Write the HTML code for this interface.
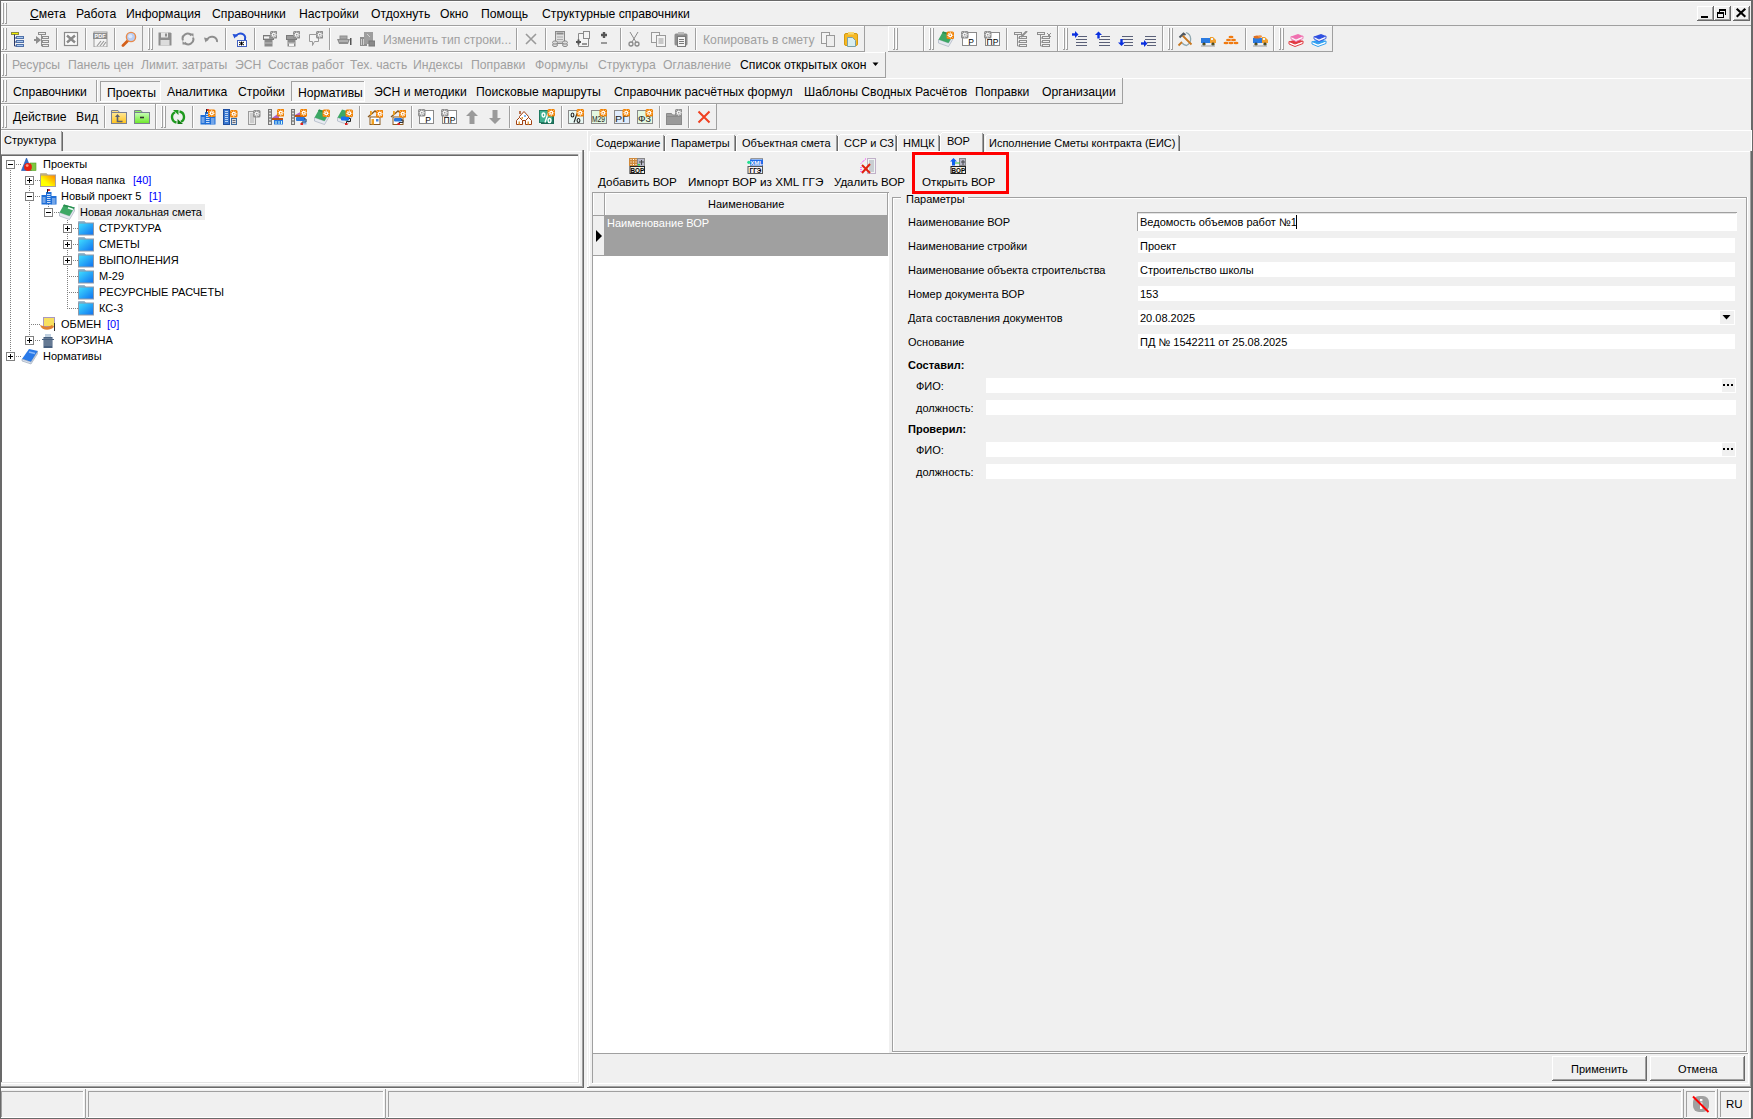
<!DOCTYPE html>
<html><head><meta charset="utf-8"><style>
html,body{margin:0;padding:0;}
body{width:1753px;height:1119px;position:relative;overflow:hidden;background:#f0f0f0;font-family:"Liberation Sans", sans-serif;}
div{position:absolute;}
.t{white-space:pre;line-height:normal;}
svg{position:absolute;}
</style></head><body>
<div style="left:0px;top:0px;width:1753px;height:1119px;background:#f0f0f0;"></div>
<div style="left:0px;top:0px;width:1753px;height:1px;background:#696969;"></div>
<div style="left:0px;top:0px;width:1px;height:1119px;background:#696969;"></div>
<div style="left:1751px;top:0px;width:2px;height:1119px;background:#696969;"></div>
<div style="left:0px;top:1118px;width:1753px;height:1px;background:#696969;"></div>
<div style="left:1px;top:1px;width:1750px;height:1px;background:#ffffff;"></div>
<div style="left:1px;top:25px;width:1750px;height:1px;background:#a0a0a0;"></div>
<div style="left:2px;top:3px;width:1px;height:20px;background:#ffffff;"></div>
<div style="left:3px;top:3px;width:1px;height:21px;background:#a0a0a0;"></div>
<div style="left:2px;top:23px;width:1px;height:1px;background:#a0a0a0;"></div>
<div style="left:5px;top:3px;width:1px;height:20px;background:#ffffff;"></div>
<div style="left:6px;top:3px;width:1px;height:21px;background:#a0a0a0;"></div>
<div style="left:5px;top:23px;width:1px;height:1px;background:#a0a0a0;"></div>
<div class="t" style="left:30px;top:7px;font-size:12.2px;color:#000;"><u>С</u>мета</div>
<div class="t" style="left:76px;top:7px;font-size:12.2px;color:#000;">Работа</div>
<div class="t" style="left:126px;top:7px;font-size:12.2px;color:#000;">Информация</div>
<div class="t" style="left:212px;top:7px;font-size:12.2px;color:#000;">Справочники</div>
<div class="t" style="left:299px;top:7px;font-size:12.2px;color:#000;">Настройки</div>
<div class="t" style="left:371px;top:7px;font-size:12.2px;color:#000;">Отдохнуть</div>
<div class="t" style="left:440px;top:7px;font-size:12.2px;color:#000;">Окно</div>
<div class="t" style="left:481px;top:7px;font-size:12.2px;color:#000;">Помощь</div>
<div class="t" style="left:542px;top:7px;font-size:12.2px;color:#000;">Структурные справочники</div>
<div style="left:1697px;top:6px;width:17px;height:15px;background:#f0f0f0;"></div>
<div style="left:1697px;top:6px;width:17px;height:1px;background:#ffffff;"></div>
<div style="left:1697px;top:6px;width:1px;height:15px;background:#ffffff;"></div>
<div style="left:1697px;top:20px;width:17px;height:1px;background:#696969;"></div>
<div style="left:1713px;top:6px;width:1px;height:15px;background:#696969;"></div>
<div style="left:1698px;top:19px;width:15px;height:1px;background:#a0a0a0;"></div>
<div style="left:1712px;top:7px;width:1px;height:13px;background:#a0a0a0;"></div>
<div style="left:1714px;top:6px;width:17px;height:15px;background:#f0f0f0;"></div>
<div style="left:1714px;top:6px;width:17px;height:1px;background:#ffffff;"></div>
<div style="left:1714px;top:6px;width:1px;height:15px;background:#ffffff;"></div>
<div style="left:1714px;top:20px;width:17px;height:1px;background:#696969;"></div>
<div style="left:1730px;top:6px;width:1px;height:15px;background:#696969;"></div>
<div style="left:1715px;top:19px;width:15px;height:1px;background:#a0a0a0;"></div>
<div style="left:1729px;top:7px;width:1px;height:13px;background:#a0a0a0;"></div>
<div style="left:1733px;top:6px;width:17px;height:15px;background:#f0f0f0;"></div>
<div style="left:1733px;top:6px;width:17px;height:1px;background:#ffffff;"></div>
<div style="left:1733px;top:6px;width:1px;height:15px;background:#ffffff;"></div>
<div style="left:1733px;top:20px;width:17px;height:1px;background:#696969;"></div>
<div style="left:1749px;top:6px;width:1px;height:15px;background:#696969;"></div>
<div style="left:1734px;top:19px;width:15px;height:1px;background:#a0a0a0;"></div>
<div style="left:1748px;top:7px;width:1px;height:13px;background:#a0a0a0;"></div>
<div style="left:1701px;top:16px;width:7px;height:2px;background:#000;"></div>
<div style="left:1719px;top:9px;width:7px;height:2px;background:#000;"></div>
<div style="left:1725px;top:9px;width:1px;height:6px;background:#000;"></div>
<div style="left:1719px;top:9px;width:1px;height:3px;background:#000;"></div>
<div style="left:1717px;top:12px;width:7px;height:2px;background:#000;"></div>
<div style="left:1717px;top:12px;width:1px;height:6px;background:#000;"></div>
<div style="left:1723px;top:12px;width:1px;height:6px;background:#000;"></div>
<div style="left:1717px;top:17px;width:7px;height:1px;background:#000;"></div>
<svg style="position:absolute;left:1733px;top:6px" width="17" height="15" viewBox="0 0 17 15"><path d="M4.5 3.5l7 6.5M11.5 3.5l-7 6.5" stroke="#000" stroke-width="2.2" stroke-linecap="square"/></svg>
<div style="left:1px;top:26px;width:864px;height:1px;background:#ffffff;"></div>
<div style="left:1px;top:26px;width:1px;height:26px;background:#ffffff;"></div>
<div style="left:1px;top:51px;width:864px;height:1px;background:#a0a0a0;"></div>
<div style="left:864px;top:26px;width:1px;height:26px;background:#a0a0a0;"></div>
<div style="left:888px;top:26px;width:36px;height:1px;background:#ffffff;"></div>
<div style="left:888px;top:26px;width:1px;height:26px;background:#ffffff;"></div>
<div style="left:888px;top:51px;width:36px;height:1px;background:#a0a0a0;"></div>
<div style="left:923px;top:26px;width:1px;height:26px;background:#a0a0a0;"></div>
<div style="left:924px;top:26px;width:134px;height:1px;background:#ffffff;"></div>
<div style="left:924px;top:26px;width:1px;height:26px;background:#ffffff;"></div>
<div style="left:924px;top:51px;width:134px;height:1px;background:#a0a0a0;"></div>
<div style="left:1057px;top:26px;width:1px;height:26px;background:#a0a0a0;"></div>
<div style="left:1058px;top:26px;width:105px;height:1px;background:#ffffff;"></div>
<div style="left:1058px;top:26px;width:1px;height:26px;background:#ffffff;"></div>
<div style="left:1058px;top:51px;width:105px;height:1px;background:#a0a0a0;"></div>
<div style="left:1162px;top:26px;width:1px;height:26px;background:#a0a0a0;"></div>
<div style="left:1163px;top:26px;width:111px;height:1px;background:#ffffff;"></div>
<div style="left:1163px;top:26px;width:1px;height:26px;background:#ffffff;"></div>
<div style="left:1163px;top:51px;width:111px;height:1px;background:#a0a0a0;"></div>
<div style="left:1273px;top:26px;width:1px;height:26px;background:#a0a0a0;"></div>
<div style="left:1274px;top:26px;width:59px;height:1px;background:#ffffff;"></div>
<div style="left:1274px;top:26px;width:1px;height:26px;background:#ffffff;"></div>
<div style="left:1274px;top:51px;width:59px;height:1px;background:#a0a0a0;"></div>
<div style="left:1332px;top:26px;width:1px;height:26px;background:#a0a0a0;"></div>
<div style="left:2px;top:28px;width:1px;height:21px;background:#ffffff;"></div>
<div style="left:3px;top:28px;width:1px;height:22px;background:#a0a0a0;"></div>
<div style="left:2px;top:49px;width:1px;height:1px;background:#a0a0a0;"></div>
<div style="left:5px;top:28px;width:1px;height:21px;background:#ffffff;"></div>
<div style="left:6px;top:28px;width:1px;height:22px;background:#a0a0a0;"></div>
<div style="left:5px;top:49px;width:1px;height:1px;background:#a0a0a0;"></div>
<div style="left:893px;top:28px;width:1px;height:21px;background:#ffffff;"></div>
<div style="left:894px;top:28px;width:1px;height:22px;background:#a0a0a0;"></div>
<div style="left:893px;top:49px;width:1px;height:1px;background:#a0a0a0;"></div>
<div style="left:896px;top:28px;width:1px;height:21px;background:#ffffff;"></div>
<div style="left:897px;top:28px;width:1px;height:22px;background:#a0a0a0;"></div>
<div style="left:896px;top:49px;width:1px;height:1px;background:#a0a0a0;"></div>
<div style="left:929px;top:28px;width:1px;height:21px;background:#ffffff;"></div>
<div style="left:930px;top:28px;width:1px;height:22px;background:#a0a0a0;"></div>
<div style="left:929px;top:49px;width:1px;height:1px;background:#a0a0a0;"></div>
<div style="left:932px;top:28px;width:1px;height:21px;background:#ffffff;"></div>
<div style="left:933px;top:28px;width:1px;height:22px;background:#a0a0a0;"></div>
<div style="left:932px;top:49px;width:1px;height:1px;background:#a0a0a0;"></div>
<div style="left:1063px;top:28px;width:1px;height:21px;background:#ffffff;"></div>
<div style="left:1064px;top:28px;width:1px;height:22px;background:#a0a0a0;"></div>
<div style="left:1063px;top:49px;width:1px;height:1px;background:#a0a0a0;"></div>
<div style="left:1066px;top:28px;width:1px;height:21px;background:#ffffff;"></div>
<div style="left:1067px;top:28px;width:1px;height:22px;background:#a0a0a0;"></div>
<div style="left:1066px;top:49px;width:1px;height:1px;background:#a0a0a0;"></div>
<div style="left:1168px;top:28px;width:1px;height:21px;background:#ffffff;"></div>
<div style="left:1169px;top:28px;width:1px;height:22px;background:#a0a0a0;"></div>
<div style="left:1168px;top:49px;width:1px;height:1px;background:#a0a0a0;"></div>
<div style="left:1171px;top:28px;width:1px;height:21px;background:#ffffff;"></div>
<div style="left:1172px;top:28px;width:1px;height:22px;background:#a0a0a0;"></div>
<div style="left:1171px;top:49px;width:1px;height:1px;background:#a0a0a0;"></div>
<div style="left:1279px;top:28px;width:1px;height:21px;background:#ffffff;"></div>
<div style="left:1280px;top:28px;width:1px;height:22px;background:#a0a0a0;"></div>
<div style="left:1279px;top:49px;width:1px;height:1px;background:#a0a0a0;"></div>
<div style="left:1282px;top:28px;width:1px;height:21px;background:#ffffff;"></div>
<div style="left:1283px;top:28px;width:1px;height:22px;background:#a0a0a0;"></div>
<div style="left:1282px;top:49px;width:1px;height:1px;background:#a0a0a0;"></div>
<div style="left:56px;top:28px;width:1px;height:22px;background:#a0a0a0;"></div>
<div style="left:57px;top:28px;width:1px;height:22px;background:#ffffff;"></div>
<div style="left:85px;top:28px;width:1px;height:22px;background:#a0a0a0;"></div>
<div style="left:86px;top:28px;width:1px;height:22px;background:#ffffff;"></div>
<div style="left:114px;top:28px;width:1px;height:22px;background:#a0a0a0;"></div>
<div style="left:115px;top:28px;width:1px;height:22px;background:#ffffff;"></div>
<div style="left:142px;top:26px;width:6px;height:1px;background:#ffffff;"></div>
<div style="left:225px;top:28px;width:1px;height:22px;background:#a0a0a0;"></div>
<div style="left:226px;top:28px;width:1px;height:22px;background:#ffffff;"></div>
<div style="left:254px;top:28px;width:1px;height:22px;background:#a0a0a0;"></div>
<div style="left:255px;top:28px;width:1px;height:22px;background:#ffffff;"></div>
<div style="left:329px;top:28px;width:1px;height:22px;background:#a0a0a0;"></div>
<div style="left:330px;top:28px;width:1px;height:22px;background:#ffffff;"></div>
<div style="left:516px;top:28px;width:1px;height:22px;background:#a0a0a0;"></div>
<div style="left:517px;top:28px;width:1px;height:22px;background:#ffffff;"></div>
<div style="left:545px;top:28px;width:1px;height:22px;background:#a0a0a0;"></div>
<div style="left:546px;top:28px;width:1px;height:22px;background:#ffffff;"></div>
<div style="left:620px;top:28px;width:1px;height:22px;background:#a0a0a0;"></div>
<div style="left:621px;top:28px;width:1px;height:22px;background:#ffffff;"></div>
<div style="left:695px;top:28px;width:1px;height:22px;background:#a0a0a0;"></div>
<div style="left:696px;top:28px;width:1px;height:22px;background:#ffffff;"></div>
<div style="left:1006px;top:28px;width:1px;height:22px;background:#a0a0a0;"></div>
<div style="left:1007px;top:28px;width:1px;height:22px;background:#ffffff;"></div>
<div style="left:1245px;top:28px;width:1px;height:22px;background:#a0a0a0;"></div>
<div style="left:1246px;top:28px;width:1px;height:22px;background:#ffffff;"></div>
<div style="left:142px;top:26px;width:1px;height:26px;background:#a0a0a0;"></div>
<div style="left:148px;top:28px;width:1px;height:21px;background:#ffffff;"></div>
<div style="left:149px;top:28px;width:1px;height:22px;background:#a0a0a0;"></div>
<div style="left:148px;top:49px;width:1px;height:1px;background:#a0a0a0;"></div>
<div style="left:151px;top:28px;width:1px;height:21px;background:#ffffff;"></div>
<div style="left:152px;top:28px;width:1px;height:22px;background:#a0a0a0;"></div>
<div style="left:151px;top:49px;width:1px;height:1px;background:#a0a0a0;"></div>
<div class="t" style="left:383px;top:33px;font-size:12.2px;color:#a0a0a0;">Изменить тип строки...</div>
<div class="t" style="left:703px;top:33px;font-size:12.2px;color:#a0a0a0;">Копировать в смету</div>
<div style="left:1px;top:52px;width:885px;height:1px;background:#ffffff;"></div>
<div style="left:1px;top:52px;width:1px;height:26px;background:#ffffff;"></div>
<div style="left:1px;top:77px;width:885px;height:1px;background:#a0a0a0;"></div>
<div style="left:885px;top:52px;width:1px;height:26px;background:#a0a0a0;"></div>
<div style="left:2px;top:54px;width:1px;height:21px;background:#ffffff;"></div>
<div style="left:3px;top:54px;width:1px;height:22px;background:#a0a0a0;"></div>
<div style="left:2px;top:75px;width:1px;height:1px;background:#a0a0a0;"></div>
<div style="left:5px;top:54px;width:1px;height:21px;background:#ffffff;"></div>
<div style="left:6px;top:54px;width:1px;height:22px;background:#a0a0a0;"></div>
<div style="left:5px;top:75px;width:1px;height:1px;background:#a0a0a0;"></div>
<div class="t" style="left:12px;top:58px;font-size:12.2px;color:#a0a0a0;">Ресурсы</div>
<div class="t" style="left:68px;top:58px;font-size:12.2px;color:#a0a0a0;">Панель цен</div>
<div class="t" style="left:141px;top:58px;font-size:12.2px;color:#a0a0a0;">Лимит. затраты</div>
<div class="t" style="left:235px;top:58px;font-size:12.2px;color:#a0a0a0;">ЭСН</div>
<div class="t" style="left:268px;top:58px;font-size:12.2px;color:#a0a0a0;">Состав работ</div>
<div class="t" style="left:350px;top:58px;font-size:12.2px;color:#a0a0a0;">Тех. часть</div>
<div class="t" style="left:413px;top:58px;font-size:12.2px;color:#a0a0a0;">Индексы</div>
<div class="t" style="left:471px;top:58px;font-size:12.2px;color:#a0a0a0;">Поправки</div>
<div class="t" style="left:535px;top:58px;font-size:12.2px;color:#a0a0a0;">Формулы</div>
<div class="t" style="left:598px;top:58px;font-size:12.2px;color:#a0a0a0;">Структура</div>
<div class="t" style="left:663px;top:58px;font-size:12.2px;color:#a0a0a0;">Оглавление</div>
<div class="t" style="left:740px;top:58px;font-size:12.2px;color:#000;">Список открытых окон</div>
<svg style="position:absolute;left:872px;top:62px" width="7" height="5" viewBox="0 0 7 5"><path d="M0.5 0.5h6l-3 3.5z" fill="#000"/></svg>
<div style="left:1px;top:78px;width:1750px;height:1px;background:#ffffff;"></div>
<div style="left:1px;top:78px;width:1122px;height:1px;background:#ffffff;"></div>
<div style="left:1px;top:78px;width:1px;height:26px;background:#ffffff;"></div>
<div style="left:1px;top:103px;width:1122px;height:1px;background:#a0a0a0;"></div>
<div style="left:1122px;top:78px;width:1px;height:26px;background:#a0a0a0;"></div>
<div style="left:2px;top:80px;width:1px;height:21px;background:#ffffff;"></div>
<div style="left:3px;top:80px;width:1px;height:22px;background:#a0a0a0;"></div>
<div style="left:2px;top:101px;width:1px;height:1px;background:#a0a0a0;"></div>
<div style="left:5px;top:80px;width:1px;height:21px;background:#ffffff;"></div>
<div style="left:6px;top:80px;width:1px;height:22px;background:#a0a0a0;"></div>
<div style="left:5px;top:101px;width:1px;height:1px;background:#a0a0a0;"></div>
<div style="left:96px;top:80px;width:1px;height:22px;background:#a0a0a0;"></div>
<div style="left:97px;top:80px;width:1px;height:22px;background:#ffffff;"></div>
<div style="left:100px;top:81px;width:60px;height:20px;background:#f4f4f4;"></div>
<div style="left:100px;top:81px;width:61px;height:1px;background:#a0a0a0;"></div>
<div style="left:100px;top:81px;width:1px;height:20px;background:#a0a0a0;"></div>
<div style="left:100px;top:101px;width:61px;height:1px;background:#ffffff;"></div>
<div style="left:160px;top:81px;width:1px;height:21px;background:#ffffff;"></div>
<div style="left:291px;top:81px;width:73px;height:20px;background:#f4f4f4;"></div>
<div style="left:291px;top:81px;width:74px;height:1px;background:#a0a0a0;"></div>
<div style="left:291px;top:81px;width:1px;height:20px;background:#a0a0a0;"></div>
<div style="left:291px;top:101px;width:74px;height:1px;background:#ffffff;"></div>
<div style="left:364px;top:81px;width:1px;height:21px;background:#ffffff;"></div>
<div class="t" style="left:13px;top:85px;font-size:12.2px;color:#000;">Справочники</div>
<div class="t" style="left:107px;top:86px;font-size:12.2px;color:#000;">Проекты</div>
<div class="t" style="left:167px;top:85px;font-size:12.2px;color:#000;">Аналитика</div>
<div class="t" style="left:238px;top:85px;font-size:12.2px;color:#000;">Стройки</div>
<div class="t" style="left:298px;top:86px;font-size:12.2px;color:#000;">Нормативы</div>
<div class="t" style="left:374px;top:85px;font-size:12.2px;color:#000;">ЭСН и методики</div>
<div class="t" style="left:476px;top:85px;font-size:12.2px;color:#000;">Поисковые маршруты</div>
<div class="t" style="left:614px;top:85px;font-size:12.2px;color:#000;">Справочник расчётных формул</div>
<div class="t" style="left:804px;top:85px;font-size:12.2px;color:#000;">Шаблоны Сводных Расчётов</div>
<div class="t" style="left:975px;top:85px;font-size:12.2px;color:#000;">Поправки</div>
<div class="t" style="left:1042px;top:85px;font-size:12.2px;color:#000;">Организации</div>
<div style="left:1px;top:104px;width:155px;height:1px;background:#ffffff;"></div>
<div style="left:1px;top:104px;width:1px;height:26px;background:#ffffff;"></div>
<div style="left:1px;top:129px;width:155px;height:1px;background:#a0a0a0;"></div>
<div style="left:155px;top:104px;width:1px;height:26px;background:#a0a0a0;"></div>
<div style="left:156px;top:104px;width:561px;height:1px;background:#ffffff;"></div>
<div style="left:156px;top:104px;width:1px;height:26px;background:#ffffff;"></div>
<div style="left:156px;top:129px;width:561px;height:1px;background:#a0a0a0;"></div>
<div style="left:716px;top:104px;width:1px;height:26px;background:#a0a0a0;"></div>
<div style="left:2px;top:106px;width:1px;height:21px;background:#ffffff;"></div>
<div style="left:3px;top:106px;width:1px;height:22px;background:#a0a0a0;"></div>
<div style="left:2px;top:127px;width:1px;height:1px;background:#a0a0a0;"></div>
<div style="left:5px;top:106px;width:1px;height:21px;background:#ffffff;"></div>
<div style="left:6px;top:106px;width:1px;height:22px;background:#a0a0a0;"></div>
<div style="left:5px;top:127px;width:1px;height:1px;background:#a0a0a0;"></div>
<div style="left:161px;top:106px;width:1px;height:21px;background:#ffffff;"></div>
<div style="left:162px;top:106px;width:1px;height:22px;background:#a0a0a0;"></div>
<div style="left:161px;top:127px;width:1px;height:1px;background:#a0a0a0;"></div>
<div style="left:164px;top:106px;width:1px;height:21px;background:#ffffff;"></div>
<div style="left:165px;top:106px;width:1px;height:22px;background:#a0a0a0;"></div>
<div style="left:164px;top:127px;width:1px;height:1px;background:#a0a0a0;"></div>
<div class="t" style="left:13px;top:110px;font-size:12.2px;color:#000;">Действие</div>
<div class="t" style="left:76px;top:110px;font-size:12.2px;color:#000;">Вид</div>
<div style="left:104px;top:106px;width:1px;height:22px;background:#a0a0a0;"></div>
<div style="left:105px;top:106px;width:1px;height:22px;background:#ffffff;"></div>
<div style="left:192px;top:106px;width:1px;height:22px;background:#a0a0a0;"></div>
<div style="left:193px;top:106px;width:1px;height:22px;background:#ffffff;"></div>
<div style="left:359px;top:106px;width:1px;height:22px;background:#a0a0a0;"></div>
<div style="left:360px;top:106px;width:1px;height:22px;background:#ffffff;"></div>
<div style="left:411px;top:106px;width:1px;height:22px;background:#a0a0a0;"></div>
<div style="left:412px;top:106px;width:1px;height:22px;background:#ffffff;"></div>
<div style="left:509px;top:106px;width:1px;height:22px;background:#a0a0a0;"></div>
<div style="left:510px;top:106px;width:1px;height:22px;background:#ffffff;"></div>
<div style="left:561px;top:106px;width:1px;height:22px;background:#a0a0a0;"></div>
<div style="left:562px;top:106px;width:1px;height:22px;background:#ffffff;"></div>
<div style="left:659px;top:106px;width:1px;height:22px;background:#a0a0a0;"></div>
<div style="left:660px;top:106px;width:1px;height:22px;background:#ffffff;"></div>
<div style="left:688px;top:106px;width:1px;height:22px;background:#a0a0a0;"></div>
<div style="left:689px;top:106px;width:1px;height:22px;background:#ffffff;"></div>
<div style="left:1px;top:130px;width:1750px;height:1px;background:#ffffff;"></div>
<div class="t" style="left:4px;top:134px;font-size:11px;color:#000;">Структура</div>
<div style="left:61px;top:131px;width:1px;height:20px;background:#a0a0a0;"></div>
<div style="left:62px;top:132px;width:1px;height:19px;background:#696969;"></div>
<div style="left:63px;top:151px;width:522px;height:1px;background:#ffffff;"></div>
<div style="left:1px;top:131px;width:1px;height:23px;background:#ffffff;"></div>
<div style="left:582px;top:150px;width:1px;height:937px;background:#a0a0a0;"></div>
<div style="left:583px;top:150px;width:1px;height:938px;background:#696969;"></div>
<div style="left:1px;top:1086px;width:582px;height:1px;background:#a0a0a0;"></div>
<div style="left:0px;top:1087px;width:584px;height:1px;background:#696969;"></div>
<div style="left:1px;top:154px;width:578px;height:1px;background:#a0a0a0;"></div>
<div style="left:1px;top:155px;width:577px;height:1px;background:#696969;"></div>
<div style="left:1px;top:155px;width:1px;height:927px;background:#696969;"></div>
<div style="left:2px;top:156px;width:576px;height:926px;background:#ffffff;"></div>
<div style="left:1px;top:1082px;width:578px;height:1px;background:#e3e3e3;"></div>
<div style="left:578px;top:154px;width:1px;height:929px;background:#e3e3e3;"></div>
<div style="left:1px;top:1083px;width:579px;height:1px;background:#ffffff;"></div>
<div style="left:579px;top:154px;width:1px;height:930px;background:#ffffff;"></div>
<div style="left:587px;top:131px;width:1px;height:957px;background:#ffffff;"></div>
<div style="left:588px;top:131px;width:2px;height:20px;background:#ececec;"></div>
<div style="left:592px;top:134px;width:71px;height:1px;background:#ffffff;"></div>
<div style="left:590px;top:136px;width:1px;height:15px;background:#ffffff;"></div>
<div style="left:591px;top:135px;width:1px;height:1px;background:#ffffff;"></div>
<div style="left:663px;top:135px;width:1px;height:16px;background:#a0a0a0;"></div>
<div style="left:664px;top:136px;width:1px;height:15px;background:#696969;"></div>
<div class="t" style="left:596px;top:137px;font-size:11px;color:#000;">Содержание</div>
<div style="left:667px;top:134px;width:67px;height:1px;background:#ffffff;"></div>
<div style="left:665px;top:136px;width:1px;height:15px;background:#ffffff;"></div>
<div style="left:666px;top:135px;width:1px;height:1px;background:#ffffff;"></div>
<div style="left:734px;top:135px;width:1px;height:16px;background:#a0a0a0;"></div>
<div style="left:735px;top:136px;width:1px;height:15px;background:#696969;"></div>
<div class="t" style="left:671px;top:137px;font-size:11px;color:#000;">Параметры</div>
<div style="left:738px;top:134px;width:98px;height:1px;background:#ffffff;"></div>
<div style="left:736px;top:136px;width:1px;height:15px;background:#ffffff;"></div>
<div style="left:737px;top:135px;width:1px;height:1px;background:#ffffff;"></div>
<div style="left:836px;top:135px;width:1px;height:16px;background:#a0a0a0;"></div>
<div style="left:837px;top:136px;width:1px;height:15px;background:#696969;"></div>
<div class="t" style="left:742px;top:137px;font-size:11px;color:#000;">Объектная смета</div>
<div style="left:840px;top:134px;width:55px;height:1px;background:#ffffff;"></div>
<div style="left:838px;top:136px;width:1px;height:15px;background:#ffffff;"></div>
<div style="left:839px;top:135px;width:1px;height:1px;background:#ffffff;"></div>
<div style="left:895px;top:135px;width:1px;height:16px;background:#a0a0a0;"></div>
<div style="left:896px;top:136px;width:1px;height:15px;background:#696969;"></div>
<div class="t" style="left:844px;top:137px;font-size:11px;color:#000;">ССР и СЗ</div>
<div style="left:899px;top:134px;width:39px;height:1px;background:#ffffff;"></div>
<div style="left:897px;top:136px;width:1px;height:15px;background:#ffffff;"></div>
<div style="left:898px;top:135px;width:1px;height:1px;background:#ffffff;"></div>
<div style="left:938px;top:135px;width:1px;height:16px;background:#a0a0a0;"></div>
<div style="left:939px;top:136px;width:1px;height:15px;background:#696969;"></div>
<div class="t" style="left:903px;top:137px;font-size:11px;color:#000;">НМЦК</div>
<div style="left:987px;top:134px;width:191px;height:1px;background:#ffffff;"></div>
<div style="left:985px;top:136px;width:1px;height:15px;background:#ffffff;"></div>
<div style="left:986px;top:135px;width:1px;height:1px;background:#ffffff;"></div>
<div style="left:1178px;top:135px;width:1px;height:16px;background:#a0a0a0;"></div>
<div style="left:1179px;top:136px;width:1px;height:15px;background:#696969;"></div>
<div class="t" style="left:989px;top:137px;font-size:11px;color:#000;">Исполнение Сметы контракта (ЕИС)</div>
<div style="left:942px;top:132px;width:40px;height:1px;background:#ffffff;"></div>
<div style="left:941px;top:133px;width:1px;height:1px;background:#ffffff;"></div>
<div style="left:940px;top:134px;width:1px;height:18px;background:#ffffff;"></div>
<div style="left:982px;top:133px;width:1px;height:19px;background:#a0a0a0;"></div>
<div style="left:983px;top:134px;width:1px;height:18px;background:#696969;"></div>
<div class="t" style="left:947px;top:135px;font-size:11px;color:#000;">ВОР</div>
<div style="left:589px;top:151px;width:351px;height:1px;background:#ffffff;"></div>
<div style="left:984px;top:151px;width:766px;height:1px;background:#ffffff;"></div>
<div style="left:589px;top:151px;width:1px;height:935px;background:#ffffff;"></div>
<div style="left:1750px;top:151px;width:1px;height:936px;background:#a0a0a0;"></div>
<div style="left:1751px;top:130px;width:1px;height:21px;background:#ffffff;"></div>
<div style="left:1751px;top:151px;width:1px;height:937px;background:#696969;"></div>
<div style="left:589px;top:1086px;width:1162px;height:1px;background:#a0a0a0;"></div>
<div style="left:587px;top:1087px;width:1165px;height:1px;background:#696969;"></div>
<div class="t" style="left:598px;top:175px;font-size:11.65px;color:#000;">Добавить ВОР</div>
<div class="t" style="left:688px;top:175px;font-size:11.75px;color:#000;">Импорт ВОР из XML ГГЭ</div>
<div class="t" style="left:834px;top:176px;font-size:11.5px;color:#000;">Удалить ВОР</div>
<div class="t" style="left:922px;top:175px;font-size:11.65px;color:#000;">Открыть ВОР</div>
<div style="left:912px;top:152px;width:97px;height:42px;background:transparent;border:3px solid #ff0000;box-sizing:border-box;"></div>
<div style="left:592px;top:192px;width:297px;height:1px;background:#a0a0a0;"></div>
<div style="left:592px;top:192px;width:1px;height:861px;background:#a0a0a0;"></div>
<div style="left:593px;top:193px;width:296px;height:860px;background:#ffffff;"></div>
<div style="left:593px;top:193px;width:295px;height:22px;background:#f0f0f0;"></div>
<div style="left:593px;top:215px;width:295px;height:1px;background:#a0a0a0;"></div>
<div style="left:604px;top:193px;width:1px;height:63px;background:#a0a0a0;"></div>
<div style="left:887px;top:193px;width:1px;height:23px;background:#a0a0a0;"></div>
<div style="left:605px;top:193px;width:282px;height:1px;background:#ffffff;"></div>
<div style="left:605px;top:193px;width:1px;height:22px;background:#ffffff;"></div>
<div style="left:593px;top:193px;width:1px;height:62px;background:#ffffff;"></div>
<div style="left:593px;top:215px;width:295px;height:1px;background:#a0a0a0;"></div>
<div class="t" style="left:708px;top:198px;font-size:11px;color:#000;">Наименование</div>
<div style="left:605px;top:216px;width:283px;height:39px;background:#a0a0a0;"></div>
<div style="left:593px;top:216px;width:11px;height:39px;background:#f0f0f0;"></div>
<div style="left:593px;top:255px;width:295px;height:1px;background:#a0a0a0;"></div>
<div style="left:604px;top:216px;width:1px;height:40px;background:#a0a0a0;"></div>
<svg style="position:absolute;left:596px;top:230px" width="7" height="12" viewBox="0 0 7 12"><path d="M0 0L6 6L0 12z" fill="#000"/></svg>
<div class="t" style="left:607px;top:217px;font-size:11px;color:#ffffff;">Наименование ВОР</div>
<div style="left:892px;top:197px;width:9px;height:1px;background:#a0a0a0;"></div>
<div style="left:893px;top:198px;width:8px;height:1px;background:#ffffff;"></div>
<div style="left:968px;top:197px;width:779px;height:1px;background:#a0a0a0;"></div>
<div style="left:968px;top:198px;width:779px;height:1px;background:#ffffff;"></div>
<div style="left:892px;top:197px;width:1px;height:855px;background:#a0a0a0;"></div>
<div style="left:893px;top:198px;width:1px;height:853px;background:#ffffff;"></div>
<div style="left:1746px;top:197px;width:1px;height:855px;background:#a0a0a0;"></div>
<div style="left:1747px;top:197px;width:1px;height:856px;background:#ffffff;"></div>
<div style="left:892px;top:1051px;width:855px;height:1px;background:#a0a0a0;"></div>
<div style="left:892px;top:1052px;width:856px;height:1px;background:#ffffff;"></div>
<div class="t" style="left:906px;top:193px;font-size:11px;color:#000;">Параметры</div>
<div class="t" style="left:908px;top:216px;font-size:11px;color:#000;">Наименование ВОР</div>
<div class="t" style="left:908px;top:240px;font-size:11px;color:#000;">Наименование стройки</div>
<div class="t" style="left:908px;top:264px;font-size:11px;color:#000;">Наименование объекта строительства</div>
<div class="t" style="left:908px;top:288px;font-size:11px;color:#000;">Номер документа ВОР</div>
<div class="t" style="left:908px;top:312px;font-size:11px;color:#000;">Дата составления документов</div>
<div class="t" style="left:908px;top:336px;font-size:11px;color:#000;">Основание</div>
<div style="left:1137px;top:212px;width:600px;height:19px;background:#ffffff;"></div>
<div style="left:1137px;top:212px;width:600px;height:1px;background:#a0a0a0;"></div>
<div style="left:1137px;top:212px;width:1px;height:19px;background:#a0a0a0;"></div>
<div style="left:1138px;top:213px;width:598px;height:1px;background:#e3e3e3;"></div>
<div class="t" style="left:1140px;top:216px;font-size:11px;color:#000;">Ведомость объемов работ №1</div>
<div style="left:1296px;top:215px;width:1px;height:14px;background:#000;"></div>
<div style="left:1138px;top:238px;width:597px;height:15px;background:#ffffff;"></div>
<div class="t" style="left:1140px;top:240px;font-size:11px;color:#000;">Проект</div>
<div style="left:1138px;top:262px;width:597px;height:15px;background:#ffffff;"></div>
<div class="t" style="left:1140px;top:264px;font-size:11px;color:#000;">Строительство школы</div>
<div style="left:1138px;top:286px;width:597px;height:15px;background:#ffffff;"></div>
<div class="t" style="left:1140px;top:288px;font-size:11px;color:#000;">153</div>
<div style="left:1138px;top:310px;width:597px;height:15px;background:#ffffff;"></div>
<div class="t" style="left:1140px;top:312px;font-size:11px;color:#000;">20.08.2025</div>
<div style="left:1138px;top:334px;width:597px;height:15px;background:#ffffff;"></div>
<div class="t" style="left:1140px;top:336px;font-size:11px;color:#000;">ПД № 1542211 от 25.08.2025</div>
<div style="left:1720px;top:311px;width:14px;height:13px;background:#f0f0f0;"></div>
<svg style="position:absolute;left:1721px;top:314px" width="11" height="6" viewBox="0 0 11 6"><path d="M1.5 1h8l-4 4.5z" fill="#000"/></svg>
<div class="t" style="left:908px;top:359px;font-size:11px;color:#000;font-weight:bold;">Составил:</div>
<div class="t" style="left:916px;top:380px;font-size:11px;color:#000;">ФИО:</div>
<div class="t" style="left:916px;top:402px;font-size:11px;color:#000;">должность:</div>
<div class="t" style="left:908px;top:423px;font-size:11px;color:#000;font-weight:bold;">Проверил:</div>
<div class="t" style="left:916px;top:444px;font-size:11px;color:#000;">ФИО:</div>
<div class="t" style="left:916px;top:466px;font-size:11px;color:#000;">должность:</div>
<div style="left:986px;top:378px;width:750px;height:15px;background:#ffffff;"></div>
<div style="left:986px;top:400px;width:750px;height:15px;background:#ffffff;"></div>
<div style="left:986px;top:442px;width:750px;height:15px;background:#ffffff;"></div>
<div style="left:986px;top:464px;width:750px;height:15px;background:#ffffff;"></div>
<div style="left:1722px;top:379px;width:13px;height:13px;background:#f0f0f0;"></div>
<svg style="position:absolute;left:1721px;top:383px" width="13" height="4" viewBox="0 0 13 4"><rect x="2" y="1" width="2" height="2" fill="#000"/><rect x="6" y="1" width="2" height="2" fill="#000"/><rect x="10" y="1" width="2" height="2" fill="#000"/></svg>
<div style="left:1722px;top:443px;width:13px;height:13px;background:#f0f0f0;"></div>
<svg style="position:absolute;left:1721px;top:447px" width="13" height="4" viewBox="0 0 13 4"><rect x="2" y="1" width="2" height="2" fill="#000"/><rect x="6" y="1" width="2" height="2" fill="#000"/><rect x="10" y="1" width="2" height="2" fill="#000"/></svg>
<div style="left:592px;top:1053px;width:1157px;height:1px;background:#a0a0a0;"></div>
<div style="left:592px;top:1053px;width:1px;height:31px;background:#a0a0a0;"></div>
<div style="left:592px;top:1083px;width:1157px;height:1px;background:#ffffff;"></div>
<div style="left:1748px;top:1053px;width:1px;height:31px;background:#ffffff;"></div>
<div style="left:1552px;top:1056px;width:95px;height:1px;background:#ffffff;"></div>
<div style="left:1552px;top:1056px;width:1px;height:25px;background:#ffffff;"></div>
<div style="left:1552px;top:1080px;width:95px;height:1px;background:#696969;"></div>
<div style="left:1646px;top:1056px;width:1px;height:25px;background:#696969;"></div>
<div style="left:1553px;top:1079px;width:93px;height:1px;background:#a0a0a0;"></div>
<div style="left:1645px;top:1057px;width:1px;height:23px;background:#a0a0a0;"></div>
<div class="t" style="left:1571px;top:1063px;font-size:11px;color:#000;">Применить</div>
<div style="left:1650px;top:1056px;width:95px;height:1px;background:#ffffff;"></div>
<div style="left:1650px;top:1056px;width:1px;height:25px;background:#ffffff;"></div>
<div style="left:1650px;top:1080px;width:95px;height:1px;background:#696969;"></div>
<div style="left:1744px;top:1056px;width:1px;height:25px;background:#696969;"></div>
<div style="left:1651px;top:1079px;width:93px;height:1px;background:#a0a0a0;"></div>
<div style="left:1743px;top:1057px;width:1px;height:23px;background:#a0a0a0;"></div>
<div class="t" style="left:1678px;top:1063px;font-size:11px;color:#000;">Отмена</div>
<div style="left:1px;top:1088px;width:1750px;height:1px;background:#ffffff;"></div>
<div style="left:1px;top:1089px;width:1750px;height:1px;background:#f8f8f8;"></div>
<div style="left:85px;top:1089px;width:1px;height:30px;background:#a0a0a0;"></div>
<div style="left:385px;top:1089px;width:1px;height:30px;background:#a0a0a0;"></div>
<div style="left:1683px;top:1089px;width:1px;height:30px;background:#a0a0a0;"></div>
<div style="left:1717px;top:1089px;width:1px;height:30px;background:#a0a0a0;"></div>
<div style="left:1px;top:1091px;width:83px;height:1px;background:#a0a0a0;"></div>
<div style="left:1px;top:1091px;width:1px;height:26px;background:#a0a0a0;"></div>
<div style="left:1px;top:1117px;width:83px;height:1px;background:#ffffff;"></div>
<div style="left:83px;top:1091px;width:1px;height:27px;background:#ffffff;"></div>
<div style="left:88px;top:1091px;width:296px;height:1px;background:#a0a0a0;"></div>
<div style="left:88px;top:1091px;width:1px;height:26px;background:#a0a0a0;"></div>
<div style="left:88px;top:1117px;width:296px;height:1px;background:#ffffff;"></div>
<div style="left:383px;top:1091px;width:1px;height:27px;background:#ffffff;"></div>
<div style="left:388px;top:1091px;width:1294px;height:1px;background:#a0a0a0;"></div>
<div style="left:388px;top:1091px;width:1px;height:26px;background:#a0a0a0;"></div>
<div style="left:388px;top:1117px;width:1294px;height:1px;background:#ffffff;"></div>
<div style="left:1681px;top:1091px;width:1px;height:27px;background:#ffffff;"></div>
<div style="left:1686px;top:1091px;width:30px;height:1px;background:#a0a0a0;"></div>
<div style="left:1686px;top:1091px;width:1px;height:26px;background:#a0a0a0;"></div>
<div style="left:1686px;top:1117px;width:30px;height:1px;background:#ffffff;"></div>
<div style="left:1715px;top:1091px;width:1px;height:27px;background:#ffffff;"></div>
<div style="left:1720px;top:1091px;width:30px;height:1px;background:#a0a0a0;"></div>
<div style="left:1720px;top:1091px;width:1px;height:26px;background:#a0a0a0;"></div>
<div style="left:1720px;top:1117px;width:30px;height:1px;background:#ffffff;"></div>
<div style="left:1749px;top:1091px;width:1px;height:27px;background:#ffffff;"></div>
<div class="t" style="left:1726px;top:1098px;font-size:11.5px;color:#000;">RU</div>
<svg style="position:absolute;left:1692px;top:1095px" width="18" height="18" viewBox="0 0 18 18"><rect x="1" y="1" width="16" height="16" rx="6" fill="#a0a0a0"/><rect x="8" y="4" width="2.4" height="2.2" fill="#fff"/><rect x="8" y="7.5" width="2.4" height="6.5" fill="#fff"/><path d="M1 1.5L16.5 17" stroke="#ff0000" stroke-width="2"/></svg>
<svg style="position:absolute;left:10px;top:31px" width="16" height="16" viewBox="0 0 16 16"><rect x="1.5" y="1.5" width="7" height="2" fill="#f5ef00" stroke="#8c8c3c"/><path d="M4.5 3.5v11.5h2M4.5 7h2M4.5 11h2" stroke="#2a3a6a" fill="none"/><rect x="6.5" y="5.5" width="7" height="2" fill="#a9c9f0" stroke="#5070a8"/><rect x="6.5" y="9.5" width="7" height="2" fill="#a9c9f0" stroke="#5070a8"/><rect x="6.5" y="13.5" width="7" height="2" fill="#a9c9f0" stroke="#5070a8"/></svg>
<svg style="position:absolute;left:34px;top:31px" width="16" height="16" viewBox="0 0 16 16"><rect x="4.5" y="1.5" width="7" height="2" fill="#eee" stroke="#8e8e8e"/><path d="M7.5 3.5v11.5h1M7.5 7h1M7.5 11h1" stroke="#8e8e8e" fill="none"/><rect x="8.5" y="5.5" width="6" height="2" fill="#eee" stroke="#8e8e8e"/><rect x="8.5" y="9.5" width="6" height="2" fill="#eee" stroke="#8e8e8e"/><rect x="8.5" y="13.5" width="6" height="2" fill="#eee" stroke="#8e8e8e"/><path d="M0 9h4M3 7l2.5 2l-2.5 2z" stroke="#8e8e8e" stroke-width="2" fill="#8e8e8e"/></svg>
<svg style="position:absolute;left:63px;top:31px" width="16" height="16" viewBox="0 0 16 16"><rect x="1.5" y="1.5" width="13" height="13" fill="#fbfbfb" stroke="#8a8a8a" stroke-width="1.2"/><path d="M4 4.5l8 7M12 4.5l-8 7" stroke="#8a8a8a" stroke-width="2.4"/></svg>
<svg style="position:absolute;left:92px;top:31px" width="16" height="16" viewBox="0 0 16 16"><rect x="2" y="1" width="13" height="15" fill="#f4f4f4" stroke="#9a9a9a"/><rect x="1" y="2" width="14" height="6" fill="#8e8e8e"/><text x="8" y="7.3" font-size="5.5" font-family="Liberation Sans" font-weight="bold" fill="#fff" text-anchor="middle">PDF</text><path d="M5 15l4-5M8 15l4-5M11 15l3-4" stroke="#9a9a9a" stroke-width="1.2"/></svg>
<svg style="position:absolute;left:121px;top:31px" width="16" height="16" viewBox="0 0 16 16"><path d="M2 14.5l5-5" stroke="#d4601a" stroke-width="2.8" stroke-linecap="round"/><circle cx="10" cy="6" r="4.6" fill="#b8cdf2" stroke="#e88a4a" stroke-width="1.4"/><circle cx="9.3" cy="5.3" r="2" fill="#dfe8fa"/></svg>
<svg style="position:absolute;left:157px;top:31px" width="16" height="16" viewBox="0 0 16 16"><path d="M1.5 1.5h12l1 1v12h-13z" fill="#8e8e8e"/><rect x="4" y="1.5" width="7" height="5" fill="#e6e6e6"/><rect x="8" y="2.5" width="2" height="3" fill="#8e8e8e"/><rect x="3.5" y="9" width="9" height="5.5" fill="#dcdcdc"/></svg>
<svg style="position:absolute;left:180px;top:31px" width="16" height="16" viewBox="0 0 16 16"><path d="M3 9.5a5 5 0 0 1 8.5-5" fill="none" stroke="#8e8e8e" stroke-width="2"/><path d="M13 6.5a5 5 0 0 1 -8.5 5" fill="none" stroke="#8e8e8e" stroke-width="2"/><path d="M10 2.5h3.5v3.5z" fill="#8e8e8e"/><path d="M6 13.5h-3.5v-3.5z" fill="#8e8e8e"/></svg>
<svg style="position:absolute;left:203px;top:31px" width="16" height="16" viewBox="0 0 16 16"><path d="M4 9.5a5 4.5 0 0 1 10 1.5" fill="none" stroke="#8e8e8e" stroke-width="2"/><path d="M1 6.5l5 1l-3.5 4z" fill="#8e8e8e"/></svg>
<svg style="position:absolute;left:232px;top:31px" width="16" height="16" viewBox="0 0 16 16"><path d="M4 5.5a4.5 4 0 0 1 9 2.5v2" fill="none" stroke="#2450d8" stroke-width="2"/><path d="M0.5 3l5 0.5l-3 4z" fill="#2450d8"/><rect x="5.5" y="9.5" width="9" height="6" fill="#fff" stroke="#4060c0"/><path d="M7 11l5 3M12 11l-5 3M9.5 10.5v4" stroke="#000" stroke-width="1"/></svg>
<svg style="position:absolute;left:261px;top:31px" width="16" height="16" viewBox="0 0 16 16"><rect x="2.5" y="4.5" width="10" height="4" fill="#9a9a9a" stroke="#7a7a7a"/><rect x="3.5" y="9" width="8" height="6.5" fill="#8a8a8a"/><rect x="3.5" y="11.5" width="8" height="1" fill="#c0c0c0"/><rect x="3" y="5.5" width="5" height="2" fill="#f4f4f4"/><rect x="9" y="0" width="7.5" height="7.5" rx="1.5" fill="#8e8e8e"/><circle cx="12.75" cy="3.75" r="2.1" fill="#f4f4f4"/><circle cx="12.75" cy="3.75" r="0.8" fill="#8e8e8e"/><path d="M12.75 0.6v1M12.75 6.9v-1M9.6 3.75h1M15.9 3.75h-1M10.5 1.5l0.8 0.8M15 1.5l-0.8 0.8M10.5 6l0.8 -0.8M15 6l-0.8 -0.8" stroke="#f4f4f4" stroke-width="0.8"/></svg>
<svg style="position:absolute;left:284px;top:31px" width="16" height="16" viewBox="0 0 16 16"><rect x="2.5" y="4.5" width="10" height="4" fill="#9a9a9a" stroke="#7a7a7a"/><rect x="3.5" y="9" width="8" height="6.5" fill="#8a8a8a"/><rect x="3.5" y="11.5" width="8" height="1" fill="#c0c0c0"/><rect x="5" y="12.5" width="5" height="2.5" fill="#f4f4f4"/><rect x="9" y="0" width="7.5" height="7.5" rx="1.5" fill="#8e8e8e"/><circle cx="12.75" cy="3.75" r="2.1" fill="#f4f4f4"/><circle cx="12.75" cy="3.75" r="0.8" fill="#8e8e8e"/><path d="M12.75 0.6v1M12.75 6.9v-1M9.6 3.75h1M15.9 3.75h-1M10.5 1.5l0.8 0.8M15 1.5l-0.8 0.8M10.5 6l0.8 -0.8M15 6l-0.8 -0.8" stroke="#f4f4f4" stroke-width="0.8"/></svg>
<svg style="position:absolute;left:307px;top:31px" width="16" height="16" viewBox="0 0 16 16"><path d="M2.5 3.5h9v7h-4l-2 4v-4h-3z" fill="#f4f4f4" stroke="#9a9a9a"/><rect x="9" y="0" width="7.5" height="7.5" rx="1.5" fill="#8e8e8e"/><circle cx="12.75" cy="3.75" r="2.1" fill="#f4f4f4"/><circle cx="12.75" cy="3.75" r="0.8" fill="#8e8e8e"/><path d="M12.75 0.6v1M12.75 6.9v-1M9.6 3.75h1M15.9 3.75h-1M10.5 1.5l0.8 0.8M15 1.5l-0.8 0.8M10.5 6l0.8 -0.8M15 6l-0.8 -0.8" stroke="#f4f4f4" stroke-width="0.8"/></svg>
<svg style="position:absolute;left:336px;top:31px" width="16" height="16" viewBox="0 0 16 16"><path d="M1 8h13l-2 5h-9z" fill="#8e8e8e"/><rect x="4" y="5" width="7" height="3" fill="#a8a8a8" stroke="#8e8e8e"/><path d="M3 10h9" stroke="#cfcfcf"/><rect x="14" y="7" width="1.5" height="7" fill="#555"/></svg>
<svg style="position:absolute;left:359px;top:31px" width="16" height="16" viewBox="0 0 16 16"><rect x="1" y="6" width="7" height="9" fill="#8e8e8e"/><rect x="5" y="1" width="9" height="12" fill="#9e9e9e"/><rect x="10" y="10" width="6" height="5" fill="#8a8a8a" stroke="#777"/><path d="M2.5 8v6M4.5 8v6M8 3l3 3" stroke="#cfcfcf"/></svg>
<svg style="position:absolute;left:523px;top:31px" width="16" height="16" viewBox="0 0 16 16"><path d="M3 3l10 10M13 3l-10 10" stroke="#9a9a9a" stroke-width="1.6"/></svg>
<svg style="position:absolute;left:552px;top:31px" width="16" height="16" viewBox="0 0 16 16"><rect x="3.5" y="0.5" width="9" height="12" fill="#e0e0e0" stroke="#8a8a8a"/><rect x="4.5" y="1.5" width="7" height="2" fill="#8a8a8a"/><path d="M5 6h6M5 8.5h6M5 11h6" stroke="#aaa"/><ellipse cx="3" cy="14" rx="2.5" ry="1.6" fill="#ddd" stroke="#8a8a8a"/><ellipse cx="13" cy="14" rx="2.5" ry="1.6" fill="#ddd" stroke="#8a8a8a"/><ellipse cx="3" cy="11.5" rx="2.5" ry="1.6" fill="#ddd" stroke="#8a8a8a"/><ellipse cx="13" cy="11.5" rx="2.5" ry="1.6" fill="#ddd" stroke="#8a8a8a"/></svg>
<svg style="position:absolute;left:575px;top:31px" width="16" height="16" viewBox="0 0 16 16"><path d="M3.5 2.5h7l3 3v10h-10z" fill="#f4f4f4" stroke="#8a8a8a"/><rect x="8.5" y="0.5" width="6" height="7" fill="#f4f4f4" stroke="#8a8a8a"/><path d="M1 11h5M3.5 8.5v5" stroke="#555" stroke-width="2"/><path d="M7 13h5" stroke="#777" stroke-width="1.5"/></svg>
<svg style="position:absolute;left:596px;top:31px" width="16" height="16" viewBox="0 0 16 16"><path d="M5 4h6M8 1v6" stroke="#555" stroke-width="2.4"/><path d="M5 12h6" stroke="#999" stroke-width="2"/></svg>
<svg style="position:absolute;left:626px;top:31px" width="16" height="16" viewBox="0 0 16 16"><path d="M4 1l6 10M12 1l-6 10" stroke="#8a8a8a" stroke-width="1"/><circle cx="5" cy="13" r="2" fill="none" stroke="#8a8a8a" stroke-width="1.3"/><circle cx="11" cy="13" r="2" fill="none" stroke="#8a8a8a" stroke-width="1.3"/></svg>
<svg style="position:absolute;left:650px;top:31px" width="16" height="16" viewBox="0 0 16 16"><rect x="1.5" y="1.5" width="8" height="10" fill="#f4f4f4" stroke="#9a9a9a"/><rect x="6.5" y="4.5" width="9" height="11" fill="#f4f4f4" stroke="#9a9a9a"/><path d="M8.5 8h5M8.5 10h5M8.5 12h5" stroke="#9a9a9a"/></svg>
<svg style="position:absolute;left:673px;top:31px" width="16" height="16" viewBox="0 0 16 16"><rect x="1.5" y="2.5" width="13" height="12" rx="1.5" fill="#8e8e8e"/><rect x="5" y="1" width="6" height="2.5" fill="#bbb"/><rect x="4.5" y="5.5" width="8" height="10" fill="#f4f4f4" stroke="#7a7a7a"/><path d="M6 8.5h5M6 10.5h5M6 12.5h5" stroke="#7a7a7a"/></svg>
<svg style="position:absolute;left:820px;top:31px" width="16" height="16" viewBox="0 0 16 16"><rect x="1.5" y="1.5" width="8" height="11" fill="#f4f4f4" stroke="#9a9a9a"/><rect x="6.5" y="4.5" width="8" height="11" fill="#eeeeee" stroke="#9a9a9a"/></svg>
<svg style="position:absolute;left:843px;top:31px" width="16" height="16" viewBox="0 0 16 16"><rect x="1.5" y="2.5" width="13" height="12" rx="1.5" fill="#f6b824" stroke="#d39a10"/><rect x="5" y="1" width="6" height="2.5" fill="#f8d870"/><path d="M4.5 6.5h5l3 3v6h-8z" fill="#d8eef0" stroke="#7aa0a8"/></svg>
<svg style="position:absolute;left:938px;top:31px" width="16" height="16" viewBox="0 0 16 16"><path d="M0.5 8.5L10.5 12L15.5 3.5V7L10.5 15.5L0.5 12z" fill="#e6eaf0" stroke="#a8b0c0" stroke-width="0.7"/><path d="M5 0.5L15.5 3.5L10.5 12L0.5 8.5z" fill="#3da865"/><path d="M5 0.5L15.5 3.5L14.5 5L4 2z" fill="#2a8e50"/><path d="M9 3.8L14 5.6" stroke="#f0fff8" stroke-width="1.6"/><rect x="8.5" y="0.5" width="7.5" height="7.5" rx="1.5" fill="#f08000"/><circle cx="12.25" cy="4.25" r="2.1" fill="#fff"/><circle cx="12.25" cy="4.25" r="0.8" fill="#f08000"/><path d="M12.25 1.1v1M12.25 7.4v-1M9.1 4.25h1M15.4 4.25h-1M10.0 2.0l0.8 0.8M14.5 2.0l-0.8 0.8M10.0 6.5l0.8 -0.8M14.5 6.5l-0.8 -0.8" stroke="#fff" stroke-width="0.8"/></svg>
<svg style="position:absolute;left:961px;top:31px" width="16" height="16" viewBox="0 0 16 16"><rect x="1.5" y="1.5" width="14" height="13" fill="#fff" stroke="#8a8a8a"/><rect x="0" y="0" width="7.5" height="7.5" rx="1.5" fill="#8e8e8e"/><circle cx="3.75" cy="3.75" r="2.1" fill="#f4f4f4"/><circle cx="3.75" cy="3.75" r="0.8" fill="#8e8e8e"/><path d="M3.75 0.6v1M3.75 6.9v-1M0.6 3.75h1M6.9 3.75h-1M1.5 1.5l0.8 0.8M6 1.5l-0.8 0.8M1.5 6l0.8 -0.8M6 6l-0.8 -0.8" stroke="#f4f4f4" stroke-width="0.8"/><text x="10" y="14" font-size="8.5" font-family="Liberation Sans" fill="#000" text-anchor="middle">Р</text></svg>
<svg style="position:absolute;left:984px;top:31px" width="16" height="16" viewBox="0 0 16 16"><rect x="1.5" y="1.5" width="14" height="13" fill="#fff" stroke="#8a8a8a"/><rect x="0" y="0" width="7.5" height="7.5" rx="1.5" fill="#8e8e8e"/><circle cx="3.75" cy="3.75" r="2.1" fill="#f4f4f4"/><circle cx="3.75" cy="3.75" r="0.8" fill="#8e8e8e"/><path d="M3.75 0.6v1M3.75 6.9v-1M0.6 3.75h1M6.9 3.75h-1M1.5 1.5l0.8 0.8M6 1.5l-0.8 0.8M1.5 6l0.8 -0.8M6 6l-0.8 -0.8" stroke="#f4f4f4" stroke-width="0.8"/><text x="8.5" y="14" font-size="8.5" font-family="Liberation Sans" fill="#000" text-anchor="middle">ПР</text></svg>
<svg style="position:absolute;left:1013px;top:31px" width="16" height="16" viewBox="0 0 16 16"><rect x="1.5" y="1.5" width="7" height="2" fill="#eee" stroke="#8e8e8e"/><path d="M4.5 3.5v11.5h2M4.5 7h2M4.5 11h2" stroke="#8e8e8e" fill="none"/><rect x="6.5" y="5.5" width="7" height="2" fill="#eee" stroke="#8e8e8e"/><rect x="6.5" y="9.5" width="7" height="2" fill="#eee" stroke="#8e8e8e"/><rect x="6.5" y="13.5" width="7" height="2" fill="#eee" stroke="#8e8e8e"/><path d="M8 6l6-6" stroke="#8e8e8e" stroke-width="2"/></svg>
<svg style="position:absolute;left:1036px;top:31px" width="16" height="16" viewBox="0 0 16 16"><rect x="1.5" y="1.5" width="7" height="2" fill="#eee" stroke="#8e8e8e"/><path d="M4.5 3.5v11.5h2M4.5 7h2M4.5 11h2" stroke="#8e8e8e" fill="none"/><rect x="6.5" y="5.5" width="7" height="2" fill="#eee" stroke="#8e8e8e"/><rect x="6.5" y="9.5" width="7" height="2" fill="#eee" stroke="#8e8e8e"/><rect x="6.5" y="13.5" width="7" height="2" fill="#eee" stroke="#8e8e8e"/><path d="M11 2l4 4M15 2l-4 4" stroke="#8e8e8e" stroke-width="1"/></svg>
<svg style="position:absolute;left:1072px;top:31px" width="16" height="16" viewBox="0 0 16 16"><g transform="translate(0,0)"><path d="M6 5.5h9M4 8.5h11M4 11.5h11M4 14.5h11" stroke="#5a6078" stroke-width="1"/><path d="M0 3.5h4" stroke="#0a30e0" stroke-width="2.4"/><path d="M3 0l3.5 3.5l-3.5 3.5z" fill="#0a30e0"/></g></svg>
<svg style="position:absolute;left:1095px;top:31px" width="16" height="16" viewBox="0 0 16 16"><g transform="translate(0,0)"><path d="M6 5.5h9M4 8.5h11M4 11.5h11M4 14.5h11" stroke="#5a6078" stroke-width="1"/><path d="M3.5 7.5v-4" stroke="#0a30e0" stroke-width="2.4"/><path d="M0 4l3.5-3.5l3.5 3.5z" fill="#0a30e0"/></g></svg>
<svg style="position:absolute;left:1118px;top:31px" width="16" height="16" viewBox="0 0 16 16"><g transform="translate(0,0)"><path d="M4 5.5h11M4 8.5h11M6 11.5h9M6 14.5h9" stroke="#5a6078" stroke-width="1"/><path d="M3.5 8v4" stroke="#0a30e0" stroke-width="2.4"/><path d="M0 11.5l3.5 3.5l3.5-3.5z" fill="#0a30e0"/></g></svg>
<svg style="position:absolute;left:1141px;top:31px" width="16" height="16" viewBox="0 0 16 16"><g transform="translate(0,0)"><path d="M4 5.5h11M4 8.5h11M6 11.5h9M6 14.5h9" stroke="#5a6078" stroke-width="1"/><path d="M0 12.5h4" stroke="#0a30e0" stroke-width="2.4"/><path d="M3 9l3.5 3.5l-3.5 3.5z" fill="#0a30e0"/></g></svg>
<svg style="position:absolute;left:1177px;top:31px" width="16" height="16" viewBox="0 0 16 16"><path d="M9 1.5A7 7 0 0 1 9.5 14.5A7 7 0 0 1 5 12" fill="none" stroke="#90a8b0" stroke-width="1.3"/><path d="M1.5 14.5l3.5-3.5" stroke="#c87820" stroke-width="1.8"/><path d="M5.5 4.5l9 9" stroke="#c87820" stroke-width="1.8"/><path d="M2.5 6.5l4-4l2 1.5" stroke="#505860" stroke-width="2" fill="none"/></svg>
<svg style="position:absolute;left:1200px;top:31px" width="16" height="16" viewBox="0 0 16 16"><rect x="1" y="7" width="10" height="5" fill="#2a7ae0"/><path d="M10 6h3l3 3v3h-6z" fill="#f0a030"/><rect x="11" y="7" width="2" height="2" fill="#e8f4ff"/><circle cx="4" cy="13" r="1.6" fill="#222"/><circle cx="13" cy="13" r="1.6" fill="#222"/><circle cx="4" cy="13" r="0.6" fill="#ee0"/><circle cx="13" cy="13" r="0.6" fill="#ee0"/><rect x="1" y="14.5" width="14" height="1" fill="#999"/></svg>
<svg style="position:absolute;left:1223px;top:31px" width="16" height="16" viewBox="0 0 16 16"><ellipse cx="8" cy="6" rx="2.5" ry="1.3" fill="#f07a10"/><ellipse cx="5.5" cy="9" rx="2.5" ry="1.3" fill="#f07a10"/><ellipse cx="10.5" cy="9" rx="2.5" ry="1.3" fill="#f07a10"/><ellipse cx="3" cy="12" rx="2.5" ry="1.3" fill="#f07a10"/><ellipse cx="8" cy="12" rx="2.5" ry="1.3" fill="#f07a10"/><ellipse cx="13" cy="12" rx="2.5" ry="1.3" fill="#f07a10"/></svg>
<svg style="position:absolute;left:1252px;top:31px" width="16" height="16" viewBox="0 0 16 16"><rect x="1" y="7" width="10" height="5" fill="#2a7ae0"/><path d="M10 6h3l3 3v3h-6z" fill="#f0a030"/><rect x="11" y="7" width="2" height="2" fill="#e8f4ff"/><circle cx="4" cy="13" r="1.6" fill="#222"/><circle cx="13" cy="13" r="1.6" fill="#222"/><circle cx="4" cy="13" r="0.6" fill="#ee0"/><circle cx="13" cy="13" r="0.6" fill="#ee0"/><rect x="1" y="14.5" width="14" height="1" fill="#999"/><ellipse cx="5" cy="6" rx="3.5" ry="1.5" fill="#e07020"/><ellipse cx="8" cy="5.5" rx="2" ry="1.2" fill="#f09040"/></svg>
<svg style="position:absolute;left:1288px;top:31px" width="16" height="16" viewBox="0 0 16 16"><path d="M1 10.5L7 13L15 10V12.5L7 15.5L1 13z" fill="#fff" stroke="#e03a40" stroke-width="1"/><path d="M1 10.5L9 8L15 10L7 13z" fill="#e03a40"/><path d="M3 5.5L8 8L15 5V7.5L8 10.5L3 8z" fill="#f8f8f8" stroke="#f070b0" stroke-width="0.9"/><path d="M3 5.5L10 3L15 5L8 8z" fill="#f070b0"/></svg>
<svg style="position:absolute;left:1311px;top:31px" width="16" height="16" viewBox="0 0 16 16"><path d="M1 10.5L7 13L15 10V12.5L7 15.5L1 13z" fill="#fff" stroke="#30a0f0" stroke-width="1"/><path d="M1 10.5L9 8L15 10L7 13z" fill="#30a0f0"/><path d="M3 5.5L8 8L15 5V7.5L8 10.5L3 8z" fill="#f8f8f8" stroke="#3050e0" stroke-width="0.9"/><path d="M3 5.5L10 3L15 5L8 8z" fill="#3050e0"/></svg>
<svg style="position:absolute;left:111px;top:110px" width="16" height="16" viewBox="0 0 16 16"><defs><linearGradient id="fgup" x1="0" y1="0" x2="0" y2="1"><stop offset="0" stop-color="#ffe898"/><stop offset="1" stop-color="#ffc21a"/></linearGradient></defs><path d="M0.5 0.5h6.5l1.5 2h7v11h-15z" fill="#ffe080" stroke="#7a8090" stroke-width="1"/><rect x="0.5" y="2.5" width="15" height="11" fill="url(#fgup)" stroke="#7a8090" stroke-width="1"/><path d="M6.5 6v5.5h5" stroke="#5a6070" stroke-width="1.6" fill="none"/><path d="M4 7l2.5-3l2.5 3z" fill="#5a6070"/></svg>
<svg style="position:absolute;left:134px;top:110px" width="16" height="16" viewBox="0 0 16 16"><defs><linearGradient id="fgminus" x1="0" y1="0" x2="0" y2="1"><stop offset="0" stop-color="#c8ffb8"/><stop offset="1" stop-color="#6ce828"/></linearGradient></defs><path d="M0.5 0.5h6.5l1.5 2h7v11h-15z" fill="#90f060" stroke="#7a8090" stroke-width="1"/><rect x="0.5" y="2.5" width="15" height="11" fill="url(#fgminus)" stroke="#7a8090" stroke-width="1"/><path d="M6 7.5h4" stroke="#333" stroke-width="1.6"/></svg>
<svg style="position:absolute;left:170px;top:109px" width="16" height="16" viewBox="0 0 16 16"><path d="M6.5 13.5A5.5 5.5 0 0 1 5 3.2" fill="none" stroke="#1f9a1f" stroke-width="2.4"/><path d="M9.5 2.5A5.5 5.5 0 0 1 11 12.8" fill="none" stroke="#1f9a1f" stroke-width="2.4"/><path d="M3 1h5.5v5z" fill="#1f9a1f"/><path d="M13 15h-5.5v-5z" fill="#127a12"/></svg>
<svg style="position:absolute;left:200px;top:109px" width="16" height="16" viewBox="0 0 16 16"><rect x="0.5" y="6" width="5" height="9.5" fill="#1f6fd8"/><rect x="5" y="3" width="5.5" height="12.5" fill="#1f6fd8"/><rect x="10" y="7" width="5.5" height="8.5" fill="#1f6fd8"/><path d="M1.5 9h3M1.5 11h3M1.5 13h3M6 5.5h3.5M6 7.5h3.5M6 9.5h3.5M6 11.5h3.5M6 13.5h3.5M11 10h3.5M11 12h3.5M11 14h3.5" stroke="#c8dcf8" stroke-width="1"/><rect x="6" y="0" width="1" height="3.5" fill="#222"/><path d="M7 0h2.5l-1 1l1 1h-2.5z" fill="#e02020"/><rect x="8" y="0.5" width="7.5" height="7.5" rx="1.5" fill="#f08000"/><circle cx="11.75" cy="4.25" r="2.1" fill="#fff"/><circle cx="11.75" cy="4.25" r="0.8" fill="#f08000"/><path d="M11.75 1.1v1M11.75 7.4v-1M8.6 4.25h1M14.9 4.25h-1M9.5 2.0l0.8 0.8M14 2.0l-0.8 0.8M9.5 6.5l0.8 -0.8M14 6.5l-0.8 -0.8" stroke="#fff" stroke-width="0.8"/></svg>
<svg style="position:absolute;left:222px;top:109px" width="16" height="16" viewBox="0 0 16 16"><rect x="1.5" y="0.5" width="6" height="15" fill="#3a78d0" stroke="#1e4ea0"/><path d="M3 2.5h3M3 4.5h3M3 6.5h3M3 8.5h3M3 10.5h3M3 12.5h3" stroke="#bcd4f4"/><rect x="9.5" y="9.5" width="5" height="6" fill="#ddd" stroke="#3a6aa0"/><path d="M10.5 11.5h3M10.5 13.5h3" stroke="#667"/><rect x="8" y="1" width="7.5" height="7.5" rx="1.5" fill="#f08000"/><circle cx="11.75" cy="4.75" r="2.1" fill="#fff"/><circle cx="11.75" cy="4.75" r="0.8" fill="#f08000"/><path d="M11.75 1.6v1M11.75 7.9v-1M8.6 4.75h1M14.9 4.75h-1M9.5 2.5l0.8 0.8M14 2.5l-0.8 0.8M9.5 7l0.8 -0.8M14 7l-0.8 -0.8" stroke="#fff" stroke-width="0.8"/></svg>
<svg style="position:absolute;left:245px;top:109px" width="16" height="16" viewBox="0 0 16 16"><rect x="3.5" y="2.5" width="7" height="13" fill="#e8e8e8" stroke="#9a9a9a"/><path d="M5 5h4M5 7h4M5 9h4M5 11h4M5 13h4" stroke="#b0b0b0"/><rect x="8" y="1" width="7.5" height="7.5" rx="1.5" fill="#8e8e8e"/><circle cx="11.75" cy="4.75" r="2.1" fill="#f4f4f4"/><circle cx="11.75" cy="4.75" r="0.8" fill="#8e8e8e"/><path d="M11.75 1.6v1M11.75 7.9v-1M8.6 4.75h1M14.9 4.75h-1M9.5 2.5l0.8 0.8M14 2.5l-0.8 0.8M9.5 7l0.8 -0.8M14 7l-0.8 -0.8" stroke="#f4f4f4" stroke-width="0.8"/></svg>
<svg style="position:absolute;left:268px;top:109px" width="16" height="16" viewBox="0 0 16 16"><rect x="0.5" y="0.5" width="3" height="15" fill="#ddd" stroke="#777"/><path d="M1 3h2M1 6h2M1 9h2M1 12h2" stroke="#555"/><path d="M4 9l7-5v5z" fill="#b060c0"/><rect x="4" y="9" width="11" height="2" fill="#c05010"/><rect x="6" y="11" width="9" height="4.5" fill="#2a78e0"/><path d="M8 12v3M11 12v3M13.5 12v3" stroke="#cfe"/><rect x="9" y="0" width="7.5" height="7.5" rx="1.5" fill="#f08000"/><circle cx="12.75" cy="3.75" r="2.1" fill="#fff"/><circle cx="12.75" cy="3.75" r="0.8" fill="#f08000"/><path d="M12.75 0.6v1M12.75 6.9v-1M9.6 3.75h1M15.9 3.75h-1M10.5 1.5l0.8 0.8M15 1.5l-0.8 0.8M10.5 6l0.8 -0.8M15 6l-0.8 -0.8" stroke="#fff" stroke-width="0.8"/></svg>
<svg style="position:absolute;left:291px;top:109px" width="16" height="16" viewBox="0 0 16 16"><rect x="0.5" y="0.5" width="3" height="15" fill="#ddd" stroke="#777"/><path d="M1 3h2M1 6h2M1 9h2M1 12h2" stroke="#555"/><path d="M4 6l7-4v4z" fill="#b060c0"/><rect x="4" y="6" width="11" height="2" fill="#c05010"/><rect x="5" y="8" width="9" height="4" rx="1" fill="#2a78e0"/><path d="M13 10h2v3h-4v2" stroke="#333" fill="none"/><rect x="9.5" y="14" width="2.5" height="2" fill="#e02020"/><rect x="12" y="10" width="3.5" height="5.5" fill="#2a78e0" opacity="0.5"/><rect x="9" y="0" width="7.5" height="7.5" rx="1.5" fill="#f08000"/><circle cx="12.75" cy="3.75" r="2.1" fill="#fff"/><circle cx="12.75" cy="3.75" r="0.8" fill="#f08000"/><path d="M12.75 0.6v1M12.75 6.9v-1M9.6 3.75h1M15.9 3.75h-1M10.5 1.5l0.8 0.8M15 1.5l-0.8 0.8M10.5 6l0.8 -0.8M15 6l-0.8 -0.8" stroke="#fff" stroke-width="0.8"/></svg>
<svg style="position:absolute;left:314px;top:109px" width="16" height="16" viewBox="0 0 16 16"><path d="M0.5 8.5L10.5 12L15.5 3.5V7L10.5 15.5L0.5 12z" fill="#e6eaf0" stroke="#a8b0c0" stroke-width="0.7"/><path d="M5 0.5L15.5 3.5L10.5 12L0.5 8.5z" fill="#3da865"/><path d="M5 0.5L15.5 3.5L14.5 5L4 2z" fill="#2a8e50"/><path d="M9 3.8L14 5.6" stroke="#f0fff8" stroke-width="1.6"/><rect x="8.5" y="0.5" width="7.5" height="7.5" rx="1.5" fill="#f08000"/><circle cx="12.25" cy="4.25" r="2.1" fill="#fff"/><circle cx="12.25" cy="4.25" r="0.8" fill="#f08000"/><path d="M12.25 1.1v1M12.25 7.4v-1M9.1 4.25h1M15.4 4.25h-1M10.0 2.0l0.8 0.8M14.5 2.0l-0.8 0.8M10.0 6.5l0.8 -0.8M14.5 6.5l-0.8 -0.8" stroke="#fff" stroke-width="0.8"/></svg>
<svg style="position:absolute;left:337px;top:109px" width="16" height="16" viewBox="0 0 16 16"><path d="M0.5 8.5L10.5 12L15.5 3.5V7L10.5 15.5L0.5 12z" fill="#e6eaf0" stroke="#a8b0c0" stroke-width="0.7"/><path d="M5 0.5L15.5 3.5L10.5 12L0.5 8.5z" fill="#3da865"/><rect x="4" y="7.5" width="8" height="4" rx="1" fill="#1a70f0"/><path d="M12 9.5h1.5v3h-4v2" stroke="#222" fill="none"/><rect x="8" y="14" width="2.5" height="2" fill="#e02020"/><rect x="8.5" y="0.5" width="7.5" height="7.5" rx="1.5" fill="#f08000"/><circle cx="12.25" cy="4.25" r="2.1" fill="#fff"/><circle cx="12.25" cy="4.25" r="0.8" fill="#f08000"/><path d="M12.25 1.1v1M12.25 7.4v-1M9.1 4.25h1M15.4 4.25h-1M10.0 2.0l0.8 0.8M14.5 2.0l-0.8 0.8M10.0 6.5l0.8 -0.8M14.5 6.5l-0.8 -0.8" stroke="#fff" stroke-width="0.8"/></svg>
<svg style="position:absolute;left:367px;top:109px" width="16" height="16" viewBox="0 0 16 16"><path d="M1 8l7-6l7 6" fill="none" stroke="#8a5a20" stroke-width="1.4"/><rect x="3" y="8" width="10" height="7.5" fill="#fff" stroke="#8a5a20"/><rect x="4.5" y="10" width="2.5" height="5.5" fill="#f0a020"/><rect x="9" y="10" width="2.5" height="2.5" fill="#4a8ae0"/><rect x="3" y="2" width="1.8" height="4" fill="#f0a020"/><rect x="9" y="1" width="7.5" height="7.5" rx="1.5" fill="#f08000"/><circle cx="12.75" cy="4.75" r="2.1" fill="#fff"/><circle cx="12.75" cy="4.75" r="0.8" fill="#f08000"/><path d="M12.75 1.6v1M12.75 7.9v-1M9.6 4.75h1M15.9 4.75h-1M10.5 2.5l0.8 0.8M15 2.5l-0.8 0.8M10.5 7l0.8 -0.8M15 7l-0.8 -0.8" stroke="#fff" stroke-width="0.8"/></svg>
<svg style="position:absolute;left:390px;top:109px" width="16" height="16" viewBox="0 0 16 16"><path d="M1 8l7-6l7 6" fill="none" stroke="#8a5a20" stroke-width="1.4"/><rect x="3" y="8" width="10" height="7.5" fill="#fff" stroke="#8a5a20"/><rect x="4" y="9" width="8" height="3.5" rx="1" fill="#2a78e0"/><path d="M11 11h2v2.5h-4v1.5" stroke="#333" fill="none"/><rect x="7.5" y="14" width="2.5" height="2" fill="#e02020"/><rect x="3" y="2" width="1.8" height="4" fill="#f0a020"/><rect x="9" y="1" width="7.5" height="7.5" rx="1.5" fill="#f08000"/><circle cx="12.75" cy="4.75" r="2.1" fill="#fff"/><circle cx="12.75" cy="4.75" r="0.8" fill="#f08000"/><path d="M12.75 1.6v1M12.75 7.9v-1M9.6 4.75h1M15.9 4.75h-1M10.5 2.5l0.8 0.8M15 2.5l-0.8 0.8M10.5 7l0.8 -0.8M15 7l-0.8 -0.8" stroke="#fff" stroke-width="0.8"/></svg>
<svg style="position:absolute;left:418px;top:109px" width="16" height="16" viewBox="0 0 16 16"><rect x="1.5" y="1.5" width="14" height="13" fill="#fff" stroke="#8a8a8a"/><rect x="0" y="0" width="7.5" height="7.5" rx="1.5" fill="#8e8e8e"/><circle cx="3.75" cy="3.75" r="2.1" fill="#f4f4f4"/><circle cx="3.75" cy="3.75" r="0.8" fill="#8e8e8e"/><path d="M3.75 0.6v1M3.75 6.9v-1M0.6 3.75h1M6.9 3.75h-1M1.5 1.5l0.8 0.8M6 1.5l-0.8 0.8M1.5 6l0.8 -0.8M6 6l-0.8 -0.8" stroke="#f4f4f4" stroke-width="0.8"/><text x="10" y="14" font-size="8.5" font-family="Liberation Sans" fill="#000" text-anchor="middle">Р</text></svg>
<svg style="position:absolute;left:441px;top:109px" width="16" height="16" viewBox="0 0 16 16"><rect x="1.5" y="1.5" width="14" height="13" fill="#fff" stroke="#8a8a8a"/><rect x="0" y="0" width="7.5" height="7.5" rx="1.5" fill="#8e8e8e"/><circle cx="3.75" cy="3.75" r="2.1" fill="#f4f4f4"/><circle cx="3.75" cy="3.75" r="0.8" fill="#8e8e8e"/><path d="M3.75 0.6v1M3.75 6.9v-1M0.6 3.75h1M6.9 3.75h-1M1.5 1.5l0.8 0.8M6 1.5l-0.8 0.8M1.5 6l0.8 -0.8M6 6l-0.8 -0.8" stroke="#f4f4f4" stroke-width="0.8"/><text x="8.5" y="14" font-size="8.5" font-family="Liberation Sans" fill="#000" text-anchor="middle">ПР</text></svg>
<svg style="position:absolute;left:464px;top:109px" width="16" height="16" viewBox="0 0 16 16"><path d="M8 1l6 6h-3.5v8h-5v-8h-3.5z" fill="#9a9a9a"/></svg>
<svg style="position:absolute;left:487px;top:109px" width="16" height="16" viewBox="0 0 16 16"><path d="M8 15l6-6h-3.5v-8h-5v8h-3.5z" fill="#9a9a9a"/></svg>
<svg style="position:absolute;left:516px;top:109px" width="16" height="16" viewBox="0 0 16 16"><path d="M3.5 7.5l4.5-5l4.5 5v4h-9z" fill="#fff" stroke="#a04010" stroke-width="1"/><path d="M4 2v3" stroke="#a04010" stroke-width="1.4"/><rect x="8" y="6" width="2" height="2" fill="#80b8f0"/><rect x="5.5" y="8" width="1.5" height="2" fill="#e0a040"/><path d="M0.5 11.5l3-3l3 3v4h-6z" fill="#fff" stroke="#a04010" stroke-width="1"/><path d="M9.5 11.5l3-3l3 3v4h-6z" fill="#fff" stroke="#a04010" stroke-width="1"/><rect x="2.5" y="12.5" width="1.5" height="3" fill="#e0a040"/><rect x="11.5" y="12.5" width="1.5" height="3" fill="#e0a040"/></svg>
<svg style="position:absolute;left:539px;top:109px" width="16" height="16" viewBox="0 0 16 16"><rect x="2.5" y="3.5" width="12" height="11" fill="#2a8a70" stroke="#1a6a55"/><rect x="0.5" y="1.5" width="13" height="12" fill="#40b090" stroke="#1f7a60"/><ellipse cx="4.5" cy="6" rx="1.4" ry="2" fill="none" stroke="#fff" stroke-width="1.4"/><path d="M9 4.5L6 13.5" stroke="#fff" stroke-width="1.4"/><ellipse cx="10.5" cy="11.5" rx="1.4" ry="2" fill="none" stroke="#fff" stroke-width="1.4"/><rect x="8.5" y="0" width="7.5" height="7.5" rx="1.5" fill="#f08000"/><circle cx="12.25" cy="3.75" r="2.1" fill="#fff"/><circle cx="12.25" cy="3.75" r="0.8" fill="#f08000"/><path d="M12.25 0.6v1M12.25 6.9v-1M9.1 3.75h1M15.4 3.75h-1M10.0 1.5l0.8 0.8M14.5 1.5l-0.8 0.8M10.0 6l0.8 -0.8M14.5 6l-0.8 -0.8" stroke="#fff" stroke-width="0.8"/></svg>
<svg style="position:absolute;left:568px;top:109px" width="16" height="16" viewBox="0 0 16 16"><rect x="0.5" y="1.5" width="15" height="13" fill="#e8f8f4" stroke="#8a8a8a"/><ellipse cx="4.5" cy="6" rx="1.4" ry="2" fill="none" stroke="#222" stroke-width="1.1"/><path d="M9 4.5L6 13.5" stroke="#222" stroke-width="1.1"/><ellipse cx="10.5" cy="11.5" rx="1.4" ry="2" fill="none" stroke="#222" stroke-width="1.1"/><rect x="8.5" y="0" width="7.5" height="7.5" rx="1.5" fill="#f08000"/><circle cx="12.25" cy="3.75" r="2.1" fill="#fff"/><circle cx="12.25" cy="3.75" r="0.8" fill="#f08000"/><path d="M12.25 0.6v1M12.25 6.9v-1M9.1 3.75h1M15.4 3.75h-1M10.0 1.5l0.8 0.8M14.5 1.5l-0.8 0.8M10.0 6l0.8 -0.8M14.5 6l-0.8 -0.8" stroke="#fff" stroke-width="0.8"/></svg>
<svg style="position:absolute;left:591px;top:109px" width="16" height="16" viewBox="0 0 16 16"><rect x="0.5" y="1.5" width="15" height="13" fill="#e4f8e0" stroke="#8a8a8a"/><text x="7.5" y="12.5" font-size="9.5" font-family="Liberation Sans" fill="#222" text-anchor="middle" textLength="13" lengthAdjust="spacingAndGlyphs">M29</text><rect x="8.5" y="0" width="7.5" height="7.5" rx="1.5" fill="#f08000"/><circle cx="12.25" cy="3.75" r="2.1" fill="#fff"/><circle cx="12.25" cy="3.75" r="0.8" fill="#f08000"/><path d="M12.25 0.6v1M12.25 6.9v-1M9.1 3.75h1M15.4 3.75h-1M10.0 1.5l0.8 0.8M14.5 1.5l-0.8 0.8M10.0 6l0.8 -0.8M14.5 6l-0.8 -0.8" stroke="#fff" stroke-width="0.8"/></svg>
<svg style="position:absolute;left:614px;top:109px" width="16" height="16" viewBox="0 0 16 16"><rect x="0.5" y="1.5" width="15" height="13" fill="#e0ecfc" stroke="#8a8a8a"/><text x="7.5" y="12.5" font-size="9.5" font-family="Liberation Sans" fill="#222" text-anchor="middle" textLength="13" lengthAdjust="spacingAndGlyphs">РГ</text><rect x="8.5" y="0" width="7.5" height="7.5" rx="1.5" fill="#f08000"/><circle cx="12.25" cy="3.75" r="2.1" fill="#fff"/><circle cx="12.25" cy="3.75" r="0.8" fill="#f08000"/><path d="M12.25 0.6v1M12.25 6.9v-1M9.1 3.75h1M15.4 3.75h-1M10.0 1.5l0.8 0.8M14.5 1.5l-0.8 0.8M10.0 6l0.8 -0.8M14.5 6l-0.8 -0.8" stroke="#fff" stroke-width="0.8"/></svg>
<svg style="position:absolute;left:637px;top:109px" width="16" height="16" viewBox="0 0 16 16"><rect x="0.5" y="1.5" width="15" height="13" fill="#e4f8e0" stroke="#8a8a8a"/><text x="7.5" y="12.5" font-size="9.5" font-family="Liberation Sans" fill="#222" text-anchor="middle" textLength="13" lengthAdjust="spacingAndGlyphs">Ф3</text><rect x="8.5" y="0" width="7.5" height="7.5" rx="1.5" fill="#f08000"/><circle cx="12.25" cy="3.75" r="2.1" fill="#fff"/><circle cx="12.25" cy="3.75" r="0.8" fill="#f08000"/><path d="M12.25 0.6v1M12.25 6.9v-1M9.1 3.75h1M15.4 3.75h-1M10.0 1.5l0.8 0.8M14.5 1.5l-0.8 0.8M10.0 6l0.8 -0.8M14.5 6l-0.8 -0.8" stroke="#fff" stroke-width="0.8"/></svg>
<svg style="position:absolute;left:666px;top:109px" width="16" height="16" viewBox="0 0 16 16"><path d="M0.5 4.5h5l1 1.5h8.5v9.5h-14.5z" fill="#a0a0a0" stroke="#8a8a8a"/><rect x="0.5" y="7.5" width="15" height="8" fill="#9a9a9a" stroke="#8a8a8a"/><rect x="9" y="0" width="7.5" height="7.5" rx="1.5" fill="#8e8e8e"/><circle cx="12.75" cy="3.75" r="2.1" fill="#f4f4f4"/><circle cx="12.75" cy="3.75" r="0.8" fill="#8e8e8e"/><path d="M12.75 0.6v1M12.75 6.9v-1M9.6 3.75h1M15.9 3.75h-1M10.5 1.5l0.8 0.8M15 1.5l-0.8 0.8M10.5 6l0.8 -0.8M15 6l-0.8 -0.8" stroke="#f4f4f4" stroke-width="0.8"/></svg>
<svg style="position:absolute;left:696px;top:109px" width="16" height="16" viewBox="0 0 16 16"><path d="M2.5 2.5l11 11M13.5 2.5l-11 11" stroke="#f04020" stroke-width="2"/></svg>
<svg style="position:absolute;left:629px;top:158px" width="16" height="16" viewBox="0 0 16 16"><rect x="0" y="0" width="8" height="8" fill="#d08a3a"/><path d="M1.5 1.5h1M4 1.5h1M6.5 1.5h1M1.5 4h1M4 4h1M6.5 4h1M1.5 6.5h1M4 6.5h1M6.5 6.5h1" stroke="#fff"/><rect x="8.5" y="0.5" width="7" height="8" fill="#b8b8c8" stroke="#888"/><path d="M10 4h5M12.5 2v5" stroke="#444"/><rect x="9" y="6" width="2" height="1.5" fill="#30d040"/><rect x="1" y="8.5" width="14.5" height="7" fill="#f4f0e0" stroke="#222" stroke-width="1"/><text x="8.3" y="14.6" font-size="6.3" font-family="Liberation Sans" font-weight="bold" fill="#000" text-anchor="middle">BOP</text></svg>
<svg style="position:absolute;left:747px;top:158px" width="16" height="16" viewBox="0 0 16 16"><rect x="4" y="0.5" width="11.5" height="15" fill="#fff" stroke="#999"/><rect x="3" y="1.5" width="13" height="6" fill="#1f6ae8"/><circle cx="1.8" cy="4.3" r="1.6" fill="#20e090"/><text x="9.5" y="7" font-size="6" font-family="Liberation Sans" font-weight="bold" fill="#fff" text-anchor="middle">XML</text><rect x="1" y="8.5" width="14.5" height="7" fill="#f8f0f4" stroke="#555"/><text x="8.5" y="14.6" font-size="6.5" font-family="Liberation Sans" font-weight="bold" fill="#000" text-anchor="middle">ГГЭ</text></svg>
<svg style="position:absolute;left:860px;top:158px" width="16" height="16" viewBox="0 0 16 16"><rect x="7.5" y="0.5" width="8" height="15" fill="#f0f4f4" stroke="#c0b0c8"/><path d="M9 3h5M9 5h5M9 7h5M9 9h5M9 11h5M9 13h5" stroke="#a0a8b0"/><path d="M6 0.5l-5 5M1 9v6" stroke="#ff00ff" stroke-width="1" stroke-dasharray="1 1"/><path d="M2 7l8 8M10 6l-8 9" stroke="#e02010" stroke-width="2"/></svg>
<svg style="position:absolute;left:950px;top:158px" width="16" height="16" viewBox="0 0 16 16"><path d="M3.5 0l3.5 3.5h-2v4h-3v-4h-2z" fill="#1060f0"/><rect x="9.5" y="0.5" width="6" height="7" fill="#b8b8c8" stroke="#888"/><path d="M11 4h4M13 2v5" stroke="#444"/><path d="M5 5h5" stroke="#30c040"/><rect x="1" y="8.5" width="14.5" height="7" fill="#f4f0e0" stroke="#222" stroke-width="1"/><text x="8.3" y="14.6" font-size="6.3" font-family="Liberation Sans" font-weight="bold" fill="#000" text-anchor="middle">BOP</text></svg>
<div style="left:10px;top:170px;width:1px;height:183px;background:repeating-linear-gradient(to bottom,#808080 0 1px,transparent 1px 2px)"></div>
<div style="left:29px;top:186px;width:1px;height:151px;background:repeating-linear-gradient(to bottom,#808080 0 1px,transparent 1px 2px)"></div>
<div style="left:48px;top:204px;width:1px;height:5px;background:repeating-linear-gradient(to bottom,#808080 0 1px,transparent 1px 2px)"></div>
<div style="left:67px;top:220px;width:1px;height:88px;background:repeating-linear-gradient(to bottom,#808080 0 1px,transparent 1px 2px)"></div>
<div style="left:16px;top:164px;width:5px;height:1px;background:repeating-linear-gradient(to right,#808080 0 1px,transparent 1px 2px)"></div>
<div style="left:6px;top:160px;width:9px;height:9px;background:#ffffff;box-sizing:border-box;border:1px solid #808080;"></div>
<div style="left:8px;top:164px;width:5px;height:1px;background:#000;"></div>
<div class="t" style="left:43px;top:158px;font-size:11px;color:#000;">Проекты</div>
<div style="left:35px;top:180px;width:5px;height:1px;background:repeating-linear-gradient(to right,#808080 0 1px,transparent 1px 2px)"></div>
<div style="left:25px;top:176px;width:9px;height:9px;background:#ffffff;box-sizing:border-box;border:1px solid #808080;"></div>
<div style="left:27px;top:180px;width:5px;height:1px;background:#000;"></div>
<div style="left:29px;top:178px;width:1px;height:5px;background:#000;"></div>
<div class="t" style="left:61px;top:174px;font-size:11px;color:#000;">Новая папка</div>
<div class="t" style="left:133px;top:174px;font-size:11px;color:#0000ff;">[40]</div>
<div style="left:35px;top:196px;width:5px;height:1px;background:repeating-linear-gradient(to right,#808080 0 1px,transparent 1px 2px)"></div>
<div style="left:25px;top:192px;width:9px;height:9px;background:#ffffff;box-sizing:border-box;border:1px solid #808080;"></div>
<div style="left:27px;top:196px;width:5px;height:1px;background:#000;"></div>
<div class="t" style="left:61px;top:190px;font-size:11px;color:#000;">Новый проект 5</div>
<div class="t" style="left:149px;top:190px;font-size:11px;color:#0000ff;">[1]</div>
<div style="left:54px;top:212px;width:5px;height:1px;background:repeating-linear-gradient(to right,#808080 0 1px,transparent 1px 2px)"></div>
<div style="left:44px;top:208px;width:9px;height:9px;background:#ffffff;box-sizing:border-box;border:1px solid #808080;"></div>
<div style="left:46px;top:212px;width:5px;height:1px;background:#000;"></div>
<div style="left:78px;top:204px;width:127px;height:16px;background:#ececec;"></div>
<div class="t" style="left:80px;top:206px;font-size:11px;color:#000;">Новая локальная смета</div>
<div style="left:73px;top:228px;width:5px;height:1px;background:repeating-linear-gradient(to right,#808080 0 1px,transparent 1px 2px)"></div>
<div style="left:63px;top:224px;width:9px;height:9px;background:#ffffff;box-sizing:border-box;border:1px solid #808080;"></div>
<div style="left:65px;top:228px;width:5px;height:1px;background:#000;"></div>
<div style="left:67px;top:226px;width:1px;height:5px;background:#000;"></div>
<div class="t" style="left:99px;top:222px;font-size:11px;color:#000;">СТРУКТУРА</div>
<div style="left:73px;top:244px;width:5px;height:1px;background:repeating-linear-gradient(to right,#808080 0 1px,transparent 1px 2px)"></div>
<div style="left:63px;top:240px;width:9px;height:9px;background:#ffffff;box-sizing:border-box;border:1px solid #808080;"></div>
<div style="left:65px;top:244px;width:5px;height:1px;background:#000;"></div>
<div style="left:67px;top:242px;width:1px;height:5px;background:#000;"></div>
<div class="t" style="left:99px;top:238px;font-size:11px;color:#000;">СМЕТЫ</div>
<div style="left:73px;top:260px;width:5px;height:1px;background:repeating-linear-gradient(to right,#808080 0 1px,transparent 1px 2px)"></div>
<div style="left:63px;top:256px;width:9px;height:9px;background:#ffffff;box-sizing:border-box;border:1px solid #808080;"></div>
<div style="left:65px;top:260px;width:5px;height:1px;background:#000;"></div>
<div style="left:67px;top:258px;width:1px;height:5px;background:#000;"></div>
<div class="t" style="left:99px;top:254px;font-size:11px;color:#000;">ВЫПОЛНЕНИЯ</div>
<div style="left:67px;top:276px;width:11px;height:1px;background:repeating-linear-gradient(to right,#808080 0 1px,transparent 1px 2px)"></div>
<div class="t" style="left:99px;top:270px;font-size:11px;color:#000;">М-29</div>
<div style="left:67px;top:292px;width:11px;height:1px;background:repeating-linear-gradient(to right,#808080 0 1px,transparent 1px 2px)"></div>
<div class="t" style="left:99px;top:286px;font-size:11px;color:#000;">РЕСУРСНЫЕ РАСЧЕТЫ</div>
<div style="left:67px;top:308px;width:11px;height:1px;background:repeating-linear-gradient(to right,#808080 0 1px,transparent 1px 2px)"></div>
<div class="t" style="left:99px;top:302px;font-size:11px;color:#000;">КС-3</div>
<div style="left:29px;top:324px;width:11px;height:1px;background:repeating-linear-gradient(to right,#808080 0 1px,transparent 1px 2px)"></div>
<div class="t" style="left:61px;top:318px;font-size:11px;color:#000;">ОБМЕН</div>
<div class="t" style="left:107px;top:318px;font-size:11px;color:#0000ff;">[0]</div>
<div style="left:35px;top:340px;width:5px;height:1px;background:repeating-linear-gradient(to right,#808080 0 1px,transparent 1px 2px)"></div>
<div style="left:25px;top:336px;width:9px;height:9px;background:#ffffff;box-sizing:border-box;border:1px solid #808080;"></div>
<div style="left:27px;top:340px;width:5px;height:1px;background:#000;"></div>
<div style="left:29px;top:338px;width:1px;height:5px;background:#000;"></div>
<div class="t" style="left:61px;top:334px;font-size:11px;color:#000;">КОРЗИНА</div>
<div style="left:16px;top:356px;width:5px;height:1px;background:repeating-linear-gradient(to right,#808080 0 1px,transparent 1px 2px)"></div>
<div style="left:6px;top:352px;width:9px;height:9px;background:#ffffff;box-sizing:border-box;border:1px solid #808080;"></div>
<div style="left:8px;top:356px;width:5px;height:1px;background:#000;"></div>
<div style="left:10px;top:354px;width:1px;height:5px;background:#000;"></div>
<div class="t" style="left:43px;top:350px;font-size:11px;color:#000;">Нормативы</div>
<svg style="position:absolute;left:21px;top:157px" width="16" height="16" viewBox="0 0 16 16"><path d="M5.5 1L10.5 13.5H0.5z" fill="#2f6fd0" stroke="#1e50a8" stroke-width="0.6"/><rect x="9" y="6" width="6" height="7.5" fill="#80c840" stroke="#50a020" stroke-width="0.6"/><circle cx="7" cy="10" r="3.9" fill="#e82010"/><circle cx="6.2" cy="8.6" r="1.4" fill="#ff9a80"/></svg>
<svg style="position:absolute;left:40px;top:172px" width="16" height="16" viewBox="0 0 16 16"><defs><linearGradient id="gy" x1="0" y1="1" x2="1" y2="0"><stop offset="0.35" stop-color="#ffff00"/><stop offset="1" stop-color="#ff8000"/></linearGradient></defs><path d="M0.5 1.5h6l1 1.5h-7z" fill="#f0d040" stroke="#a8a0a0" stroke-width="0.6"/><rect x="0.5" y="3" width="15" height="11.5" fill="url(#gy)" stroke="#a8a0a0"/></svg>
<svg style="position:absolute;left:41px;top:189px" width="16" height="16" viewBox="0 0 16 16"><rect x="0.5" y="6" width="5" height="9.5" fill="#1f6fd8"/><rect x="5" y="3" width="5.5" height="12.5" fill="#1f6fd8"/><rect x="10" y="7" width="5.5" height="8.5" fill="#1f6fd8"/><path d="M1.5 9h3M1.5 11h3M1.5 13h3M6 5.5h3.5M6 7.5h3.5M6 9.5h3.5M6 11.5h3.5M6 13.5h3.5M11 10h3.5M11 12h3.5M11 14h3.5" stroke="#c8dcf8" stroke-width="1"/><rect x="6" y="0" width="1" height="3.5" fill="#222"/><path d="M7 0h2.5l-1 1l1 1h-2.5z" fill="#e02020"/></svg>
<svg style="position:absolute;left:59px;top:204px" width="16" height="16" viewBox="0 0 16 16"><path d="M0.5 8.5L10.5 12L15.5 3.5V7L10.5 15.5L0.5 12z" fill="#e6eaf0" stroke="#a8b0c0" stroke-width="0.7"/><path d="M5 0.5L15.5 3.5L10.5 12L0.5 8.5z" fill="#3da865"/><path d="M5 0.5L15.5 3.5L14.5 5L4 2z" fill="#2a8e50"/><path d="M9 3.8L14 5.6" stroke="#f0fff8" stroke-width="1.6"/></svg>
<svg style="position:absolute;left:78px;top:221px" width="16" height="16" viewBox="0 0 16 16"><defs><linearGradient id="gb" x1="0" y1="0" x2="1" y2="1"><stop offset="0" stop-color="#40e0ff"/><stop offset="1" stop-color="#1070f0"/></linearGradient></defs><path d="M0.5 0.5h6l1 1.5h-7z" fill="#60d0ff" stroke="#9098a8" stroke-width="0.6"/><rect x="0.5" y="2" width="15" height="12" fill="url(#gb)" stroke="#9098a8"/></svg>
<svg style="position:absolute;left:78px;top:237px" width="16" height="16" viewBox="0 0 16 16"><defs><linearGradient id="gb" x1="0" y1="0" x2="1" y2="1"><stop offset="0" stop-color="#40e0ff"/><stop offset="1" stop-color="#1070f0"/></linearGradient></defs><path d="M0.5 0.5h6l1 1.5h-7z" fill="#60d0ff" stroke="#9098a8" stroke-width="0.6"/><rect x="0.5" y="2" width="15" height="12" fill="url(#gb)" stroke="#9098a8"/></svg>
<svg style="position:absolute;left:78px;top:253px" width="16" height="16" viewBox="0 0 16 16"><defs><linearGradient id="gb" x1="0" y1="0" x2="1" y2="1"><stop offset="0" stop-color="#40e0ff"/><stop offset="1" stop-color="#1070f0"/></linearGradient></defs><path d="M0.5 0.5h6l1 1.5h-7z" fill="#60d0ff" stroke="#9098a8" stroke-width="0.6"/><rect x="0.5" y="2" width="15" height="12" fill="url(#gb)" stroke="#9098a8"/></svg>
<svg style="position:absolute;left:78px;top:269px" width="16" height="16" viewBox="0 0 16 16"><defs><linearGradient id="gb" x1="0" y1="0" x2="1" y2="1"><stop offset="0" stop-color="#40e0ff"/><stop offset="1" stop-color="#1070f0"/></linearGradient></defs><path d="M0.5 0.5h6l1 1.5h-7z" fill="#60d0ff" stroke="#9098a8" stroke-width="0.6"/><rect x="0.5" y="2" width="15" height="12" fill="url(#gb)" stroke="#9098a8"/></svg>
<svg style="position:absolute;left:78px;top:285px" width="16" height="16" viewBox="0 0 16 16"><defs><linearGradient id="gb" x1="0" y1="0" x2="1" y2="1"><stop offset="0" stop-color="#40e0ff"/><stop offset="1" stop-color="#1070f0"/></linearGradient></defs><path d="M0.5 0.5h6l1 1.5h-7z" fill="#60d0ff" stroke="#9098a8" stroke-width="0.6"/><rect x="0.5" y="2" width="15" height="12" fill="url(#gb)" stroke="#9098a8"/></svg>
<svg style="position:absolute;left:78px;top:301px" width="16" height="16" viewBox="0 0 16 16"><defs><linearGradient id="gb" x1="0" y1="0" x2="1" y2="1"><stop offset="0" stop-color="#40e0ff"/><stop offset="1" stop-color="#1070f0"/></linearGradient></defs><path d="M0.5 0.5h6l1 1.5h-7z" fill="#60d0ff" stroke="#9098a8" stroke-width="0.6"/><rect x="0.5" y="2" width="15" height="12" fill="url(#gb)" stroke="#9098a8"/></svg>
<svg style="position:absolute;left:40px;top:317px" width="16" height="16" viewBox="0 0 16 16"><rect x="3.5" y="0.5" width="11" height="9" fill="#f8e060" stroke="#a898c0"/><path d="M0 8c2 6 10 6 14 2l-2-2c-3 2-6 2-9 1z" fill="#e08030"/><rect x="14" y="6" width="1" height="8" fill="#333"/></svg>
<svg style="position:absolute;left:42px;top:333px" width="12" height="16" viewBox="0 0 12 16"><path d="M3 1h6v3h-6z" fill="#c0d0e0"/><rect x="1.5" y="4" width="9" height="11" fill="#486080"/><path d="M2.5 6h7M2.5 8h7M2.5 10h7M2.5 12h7" stroke="#c0c8d0" stroke-dasharray="1 1"/><rect x="0" y="6" width="12" height="1" fill="#486080"/></svg>
<svg style="position:absolute;left:21px;top:348px" width="17" height="17" viewBox="0 0 17 17"><path d="M1 11l7-10l9 2l-7 11z" fill="#2a7ae8"/><path d="M1 11l9 3l7-11v2l-7 11l-9-3z" fill="#d8e0f0" stroke="#8090a0" stroke-width="0.5"/><path d="M8 4l6 1.5" stroke="#8ab8f8" stroke-width="1.5"/></svg>
</body></html>
